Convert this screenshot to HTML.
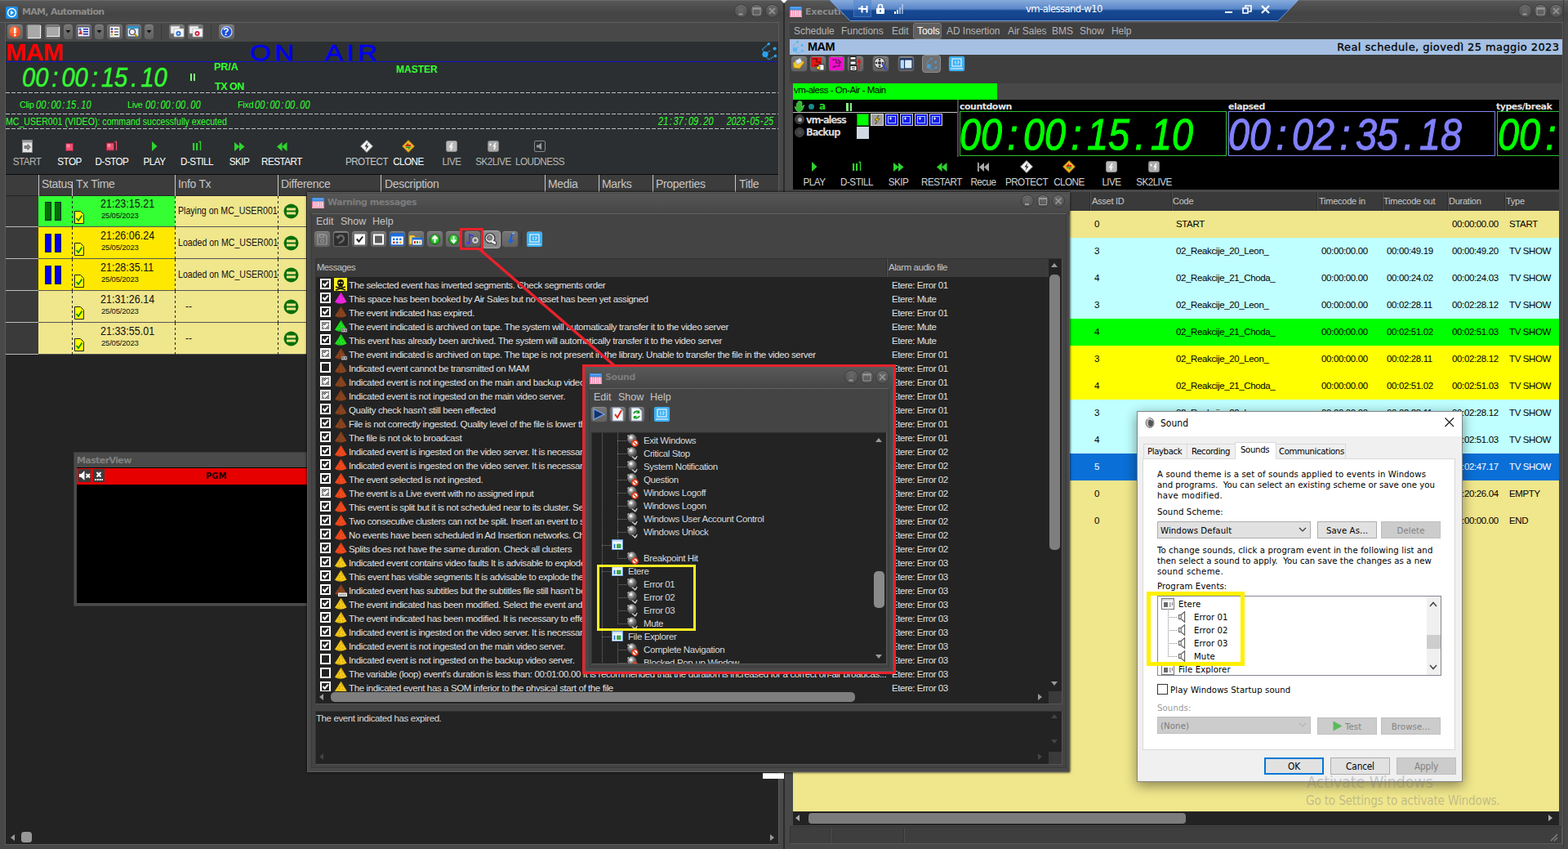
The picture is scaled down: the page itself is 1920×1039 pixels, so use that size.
<!DOCTYPE html><html><head><meta charset="utf-8"><title>MAM</title><style>
*{box-sizing:border-box;margin:0;padding:0}
html,body{width:1920px;height:1039px;overflow:hidden;background:#3e3e3e}
body{position:relative;font-family:"Liberation Sans",sans-serif;font-size:12px;color:#ddd}
div{position:absolute}
.t{white-space:nowrap;line-height:1}
svg{position:absolute;overflow:visible}
.seg{white-space:nowrap;line-height:1;font-family:"Liberation Sans",sans-serif;font-style:italic;transform-origin:0 0}
.sc{display:inline-block;position:static;width:.556em;text-align:center}
.btn{border-radius:4px;background:linear-gradient(#767676,#626262);border:1px solid #4a4a4a;box-shadow:inset 0 1px 0 #888}
.wb{border-radius:50%;background:radial-gradient(circle at 50% 35%,#6a6a6a,#4a4a4a);border:1px solid #3c3c3c;box-shadow:inset 0 1px 0 #7a7a7a}
</style></head><body><svg width="0" height="0" style="left:0;top:0"><defs><radialGradient id="spg" cx=".38" cy=".32" r=".75"><stop offset="0" stop-color="#e8e8e8"/><stop offset=".45" stop-color="#8a8a8a"/><stop offset="1" stop-color="#2a2a2a"/></radialGradient></defs></svg><div style="left:0px;top:0px;width:960px;height:1039px;background:#484848"></div><div style="left:0px;top:0px;width:960px;height:28px;background:linear-gradient(#585858,#444 60%,#484848)"></div><div style="left:0px;top:0px;width:960px;height:1px;background:#6a6a6a"></div><div style="left:959px;top:0px;width:2px;height:1039px;background:#2c2c2c"></div><div style="left:0px;top:27px;width:954px;height:1px;background:#5e5e5e"></div><div style="left:953px;top:27px;width:1px;height:1004px;background:#5a5a5a"></div><div style="left:7px;top:8px;width:15px;height:15px;background:#1e8fe8;border-radius:2px"></div><svg style="left:7px;top:8px" width="15" height="15"><circle cx="7.5" cy="7.5" r="5" fill="none" stroke="#fff" stroke-width="1.3"/><path d="M6 5L10 7.5L6 10Z" fill="#fff"/></svg><div class="t" style="left:27px;top:9px;font-weight:bold;font-size:11px;color:#8c8c8c;font-family:'DejaVu Sans',sans-serif;letter-spacing:-0.7px">MAM, Automation</div><div class="wb" style="left:899px;top:5px;width:17px;height:17px;"></div><svg style="left:899px;top:5px" width="17" height="17"><rect x="5.5" y="11.5" width="5" height="2" fill="#989898"/></svg><div class="wb" style="left:918px;top:5px;width:17px;height:17px;"></div><svg style="left:918px;top:5px" width="17" height="17"><rect x="4.0" y="5.0" width="9" height="8" fill="none" stroke="#989898" stroke-width="1"/><rect x="3.5" y="4.5" width="10" height="2" fill="#989898"/></svg><div class="wb" style="left:937px;top:5px;width:17px;height:17px;"></div><svg style="left:937px;top:5px" width="17" height="17"><path d="M5.0 5.0L12.0 12.0M12.0 5.0L5.0 12.0" stroke="#989898" stroke-width="1.6" fill="none"/></svg><div class="btn" style="left:8px;top:29px;width:21px;height:20px;"></div><div class="btn" style="left:31px;top:29px;width:21px;height:20px;"></div><div class="btn" style="left:54px;top:29px;width:21px;height:20px;"></div><div class="btn" style="left:77px;top:29px;width:13px;height:20px;"></div><div class="btn" style="left:92px;top:29px;width:21px;height:20px;"></div><div class="btn" style="left:115px;top:29px;width:13px;height:20px;"></div><div class="btn" style="left:130px;top:29px;width:21px;height:20px;"></div><div class="btn" style="left:153px;top:29px;width:21px;height:20px;"></div><div class="btn" style="left:176px;top:29px;width:13px;height:20px;"></div><div class="btn" style="left:206px;top:29px;width:21px;height:20px;"></div><div class="btn" style="left:229px;top:29px;width:21px;height:20px;"></div><div class="btn" style="left:267px;top:29px;width:21px;height:20px;"></div><div style="left:197px;top:30px;width:1px;height:18px;background:#3a3a3a"></div><div style="left:258px;top:30px;width:1px;height:18px;background:#3a3a3a"></div><svg style="left:8px;top:29px" width="21" height="20"><circle cx="10" cy="10" r="7" fill="#f4511e"/><circle cx="9" cy="8" r="5" fill="#ff8a50" opacity=".6"/><rect x="9" y="5" width="2.4" height="7" fill="#fff"/><rect x="9" y="13" width="2.4" height="2.2" fill="#fff"/></svg><div style="left:34px;top:31px;width:16px;height:16px;background:#a9a9a9;border-right:1px solid #eee;border-bottom:1px solid #eee"></div><div style="left:57px;top:33px;width:16px;height:12px;background:#a9a9a9;border-right:1px solid #eee;border-bottom:1px solid #eee"></div><svg style="left:77px;top:29px" width="13" height="20"><path d="M3.5 8L9.5 8L6.5 11.5Z" fill="#111"/></svg><svg style="left:115px;top:29px" width="13" height="20"><path d="M3.5 8L9.5 8L6.5 11.5Z" fill="#111"/></svg><svg style="left:176px;top:29px" width="13" height="20"><path d="M3.5 8L9.5 8L6.5 11.5Z" fill="#111"/></svg><svg style="left:92px;top:29px" width="21" height="20"><rect x="3" y="4" width="15" height="12" fill="#e8eef8" stroke="#446" stroke-width="1"/><rect x="10" y="6" width="6" height="1.5" fill="#22a"/><rect x="10" y="9" width="6" height="1.5" fill="#22a"/><rect x="10" y="12" width="6" height="1.5" fill="#22a"/><path d="M4 13L7 7L9 13Z" fill="#c33"/><circle cx="6" cy="7" r="1.5" fill="#36c"/></svg><svg style="left:130px;top:29px" width="21" height="20"><rect x="4" y="3" width="13" height="14" fill="#f4f4f4" stroke="#555" stroke-width="1"/><circle cx="7" cy="6.5" r="1.3" fill="#22c"/><circle cx="7" cy="10" r="1.3" fill="#c22"/><circle cx="7" cy="13.5" r="1.3" fill="#ca2"/><rect x="10" y="6" width="5" height="1" fill="#333"/><rect x="10" y="9.5" width="5" height="1" fill="#333"/><rect x="10" y="13" width="5" height="1" fill="#333"/></svg><svg style="left:153px;top:29px" width="21" height="20"><rect x="3" y="3" width="14" height="13" fill="#dde8f6" stroke="#357" stroke-width="1"/><rect x="3" y="3" width="14" height="3" fill="#39c"/><circle cx="9" cy="10" r="3.5" fill="#eef" stroke="#444" stroke-width="1.2"/><path d="M11.5 12.5L15 16" stroke="#b80" stroke-width="2"/></svg><svg style="left:206px;top:29px" width="21" height="20"><rect x="3" y="3" width="11" height="9" fill="#eee" stroke="#999" stroke-width=".6"/><rect x="7" y="6" width="12" height="10" fill="#f6f6f6" stroke="#aaa" stroke-width=".6"/><circle cx="12.5" cy="12" r="3" fill="#1e6fd0"/><circle cx="12.5" cy="12" r="1.2" fill="#fff"/></svg><svg style="left:229px;top:29px" width="21" height="20"><rect x="3" y="3" width="11" height="9" fill="#eee" stroke="#999" stroke-width=".6"/><rect x="7" y="6" width="12" height="10" fill="#f6f6f6" stroke="#aaa" stroke-width=".6"/><circle cx="12.5" cy="12" r="3" fill="#d01e3c"/><circle cx="12.5" cy="12" r="1.2" fill="#fff"/></svg><svg style="left:267px;top:29px" width="21" height="20"><circle cx="10.5" cy="10" r="6.5" fill="#1b4fd8" stroke="#cfe0ff" stroke-width="1.2"/></svg><div class="t" style="left:273px;top:33px;font-weight:bold;font-size:12px;color:#fff">?</div><div style="left:7px;top:51px;width:946px;height:162px;background:#2b2f31"></div><div class="t" style="left:7px;top:49px;font-weight:bold;font-size:30.3px;color:#ff0000;letter-spacing:-.7px">MAM</div><div class="t" style="left:306px;top:51px;font-size:27.4px;color:#0000ee;letter-spacing:3.8px;word-spacing:18px;transform:scaleX(1.2);transform-origin:0 0;-webkit-text-stroke:.7px #0000ee">ON AIR</div><div style="left:7px;top:75px;width:946px;height:1px;background:#1414d0"></div><svg style="left:931px;top:51px" width="22" height="24" viewBox="0 0 22 24"><path d="M2.5 9.5L10 2.8M2.5 9.5L5 13.5M7 18.5L10.5 22L18 17.5M8.5 13.5L12.5 10.5" stroke="#29a3f0" stroke-width="1.5" fill="none" stroke-dasharray="1.4 1.1"/><circle cx="6" cy="15.5" r="3.6" fill="#29a3f0"/><circle cx="10.3" cy="2.8" r="1.7" fill="#29a3f0"/><circle cx="17.6" cy="8.5" r="2.1" fill="#29a3f0"/><circle cx="18.4" cy="17.5" r="1.8" fill="#29a3f0"/></svg><div class="seg" style="left:27.3px;top:78.46px;font-size:40px;color:#33ff33;-webkit-text-stroke:0.6px #33ff33;transform:scale(0.7262,0.8310)">00<span class="sc">:</span>00<span class="sc">:</span>15<span class="sc">.</span>10</div><div style="left:233px;top:90px;width:2px;height:9px;background:#7dff7d"></div><div style="left:237px;top:90px;width:2px;height:9px;background:#7dff7d"></div><div class="t" style="left:262px;top:76px;font-weight:bold;font-size:12.5px;color:#33ff33">PR/A</div><div class="t" style="left:263px;top:100px;font-weight:bold;font-size:12.5px;color:#33ff33;letter-spacing:-.5px">TX ON</div><div class="t" style="left:485px;top:79px;font-weight:bold;font-size:12px;color:#33ff33">MASTER</div><div style="left:7px;top:113px;width:946px;height:1px;background:repeating-linear-gradient(90deg,#bfc2c4 0 5px,transparent 5px 7px)"></div><div style="left:7px;top:139px;width:946px;height:1px;background:repeating-linear-gradient(90deg,#bfc2c4 0 5px,transparent 5px 7px)"></div><div style="left:7px;top:157px;width:946px;height:1px;background:repeating-linear-gradient(90deg,#bfc2c4 0 5px,transparent 5px 7px)"></div><div class="t" style="left:24px;top:123px;font-size:11px;color:#33ff33;letter-spacing:-.4px">Clip</div><div class="seg" style="left:44px;top:121.18px;font-size:20px;color:#33ff33;transform:scale(0.5531,0.6983)">00<span class="sc">:</span>00<span class="sc">:</span>15<span class="sc">.</span>10</div><div class="t" style="left:156px;top:123px;font-size:11px;color:#33ff33;letter-spacing:-.4px">Live</div><div class="seg" style="left:178px;top:121.18px;font-size:20px;color:#33ff33;transform:scale(0.5531,0.6983)">00<span class="sc">:</span>00<span class="sc">:</span>00<span class="sc">.</span>00</div><div class="t" style="left:291px;top:123px;font-size:11px;color:#33ff33;letter-spacing:-.4px">Fixd</div><div class="seg" style="left:312px;top:121.18px;font-size:20px;color:#33ff33;transform:scale(0.5531,0.6983)">00<span class="sc">:</span>00<span class="sc">:</span>00<span class="sc">.</span>00</div><div class="t" style="left:7px;top:143px;font-size:12.4px;color:#33ff33;transform:scaleX(.855);transform-origin:0 0">MC_USER001 (VIDEO): command successfully executed</div><div class="seg" style="left:806px;top:141.18px;font-size:20px;color:#33ff33;transform:scale(0.5531,0.6983)">21<span class="sc">:</span>37<span class="sc">:</span>09<span class="sc">.</span>20</div><div class="seg" style="left:890px;top:141.18px;font-size:20px;color:#33ff33;transform:scale(0.5126,0.6983)">2023<span class="sc">-</span>05<span class="sc">-</span>25</div><div class="t" style="left:-7px;top:191px;width:80px;text-align:center;font-size:13px;color:#b8b8b8;letter-spacing:-.6px;transform:scaleX(.9)">START</div><div class="t" style="left:45px;top:191px;width:80px;text-align:center;font-size:13px;color:#fff;letter-spacing:-.6px;transform:scaleX(.9)">STOP</div><div class="t" style="left:97px;top:191px;width:80px;text-align:center;font-size:13px;color:#fff;letter-spacing:-.6px;transform:scaleX(.9)">D-STOP</div><div class="t" style="left:149px;top:191px;width:80px;text-align:center;font-size:13px;color:#fff;letter-spacing:-.6px;transform:scaleX(.9)">PLAY</div><div class="t" style="left:201px;top:191px;width:80px;text-align:center;font-size:13px;color:#fff;letter-spacing:-.6px;transform:scaleX(.9)">D-STILL</div><div class="t" style="left:253px;top:191px;width:80px;text-align:center;font-size:13px;color:#fff;letter-spacing:-.6px;transform:scaleX(.9)">SKIP</div><div class="t" style="left:305px;top:191px;width:80px;text-align:center;font-size:13px;color:#fff;letter-spacing:-.6px;transform:scaleX(.9)">RESTART</div><div class="t" style="left:409px;top:191px;width:80px;text-align:center;font-size:13px;color:#c8c8c8;letter-spacing:-.6px;transform:scaleX(.9)">PROTECT</div><div class="t" style="left:460px;top:191px;width:80px;text-align:center;font-size:13px;color:#fff;letter-spacing:-.6px;transform:scaleX(.9)">CLONE</div><div class="t" style="left:513px;top:191px;width:80px;text-align:center;font-size:13px;color:#b8b8b8;letter-spacing:-.6px;transform:scaleX(.9)">LIVE</div><div class="t" style="left:564px;top:191px;width:80px;text-align:center;font-size:13px;color:#b8b8b8;letter-spacing:-.6px;transform:scaleX(.9)">SK2LIVE</div><div class="t" style="left:621px;top:191px;width:80px;text-align:center;font-size:13px;color:#b8b8b8;letter-spacing:-.6px;transform:scaleX(.9)">LOUDNESS</div><svg style="left:26.5px;top:171px" width="13" height="16"><rect x=".5" y=".5" width="12" height="15" fill="#e4e4e4" stroke="#888"/><rect x="1" y="1" width="11" height="2.5" fill="#999"/><path d="M3 7.5H7V5.5L10.5 9L7 12.5V10.5H3Z" fill="#888" stroke="#444" stroke-width=".6"/></svg><svg style="left:80.0px;top:175px" width="10" height="10"><rect x=".5" y=".5" width="9" height="9" fill="#e8506e" stroke="#a02040"/><rect x="1.5" y="1.5" width="4" height="4" fill="#ff9ab0" opacity=".7"/></svg><svg style="left:130.0px;top:172px" width="14" height="13"><rect x=".5" y="3" width="9" height="9" fill="#e8506e" stroke="#a02040"/><rect x="1.5" y="4" width="4" height="4" fill="#ff9ab0" opacity=".7"/><path d="M10.5 1.5H12.5V12" stroke="#e8506e" stroke-width="1.3" fill="none"/></svg><svg style="left:185.0px;top:173px" width="8" height="12"><path d="M1 0L7.5 6L1 12Z" fill="#2fd32f"/></svg><svg style="left:235.0px;top:172px" width="12" height="13"><rect x="1" y="3" width="2.2" height="9" fill="#2fd32f"/><rect x="5" y="3" width="2.2" height="9" fill="#2fd32f"/><path d="M8.5 1.5H10.5V12" stroke="#2fd32f" stroke-width="1.3" fill="none"/></svg><svg style="left:286.5px;top:174px" width="13" height="11"><path d="M0 0L6.5 5.5L0 11Z" fill="#2fd32f"/><path d="M6 0L12.5 5.5L6 11Z" fill="#2fd32f"/></svg><svg style="left:338.5px;top:174px" width="13" height="11"><path d="M6.5 0L0 5.5L6.5 11Z" fill="#2fd32f"/><path d="M12.5 0L6 5.5L12.5 11Z" fill="#2fd32f"/></svg><svg style="left:441.0px;top:171px" width="16" height="16"><path d="M8 .5L15.5 8L8 15.5L.5 8Z" fill="#f4f4f4" stroke="#888" stroke-width=".8"/><path d="M9.5 3L5.5 8.5H8L6.5 13L10.5 7.5H8Z" fill="#222"/></svg><svg style="left:492.0px;top:171px" width="16" height="16"><path d="M8 .5L15.5 8L8 15.5L.5 8Z" fill="#f0b428" stroke="#b07800" stroke-width=".8"/><path d="M4.5 7L8 4L8 6H11V8H4.5Z" fill="#d02020"/><path d="M11.5 9L8 12V10H5V8.5H11.5Z" fill="#20a020"/></svg><svg style="left:546.0px;top:172px" width="14" height="14"><rect x=".5" y=".5" width="13" height="13" rx="2" fill="#b8b8b8" stroke="#8a8a8a"/><path d="M8 3L5 7.5H7.5L6 11.5" stroke="#f4f4f4" stroke-width="1.8" fill="none"/></svg><svg style="left:597.0px;top:172px" width="14" height="14"><rect x=".5" y=".5" width="13" height="13" rx="2" fill="#a8a8a8" stroke="#808080"/><path d="M2 5H5M3.5 3.5V6.5" stroke="#f4f4f4" stroke-width="1.2"/><path d="M10 3L7.5 7H9.5L8 11" stroke="#f4f4f4" stroke-width="1.6" fill="none"/></svg><svg style="left:654.0px;top:172px" width="14" height="14"><rect x=".5" y=".5" width="13" height="13" rx="1.5" fill="none" stroke="#8a8a8a"/><path d="M3 5.5H5.5L9 2.5V11.5L5.5 8.5H3Z" fill="#9a9a9a"/></svg><div style="left:7px;top:212.5px;width:946px;height:2px;background:#0c0c0c"></div><div style="left:7px;top:214px;width:946px;height:26px;background:#3c3c3c"></div><div style="left:7px;top:239px;width:946px;height:1px;background:#999"></div><div style="left:7px;top:239px;width:946px;height:780px;background:#232323"></div><div class="t" style="left:51px;top:217.6px;font-size:14px;color:#c4c4c4;letter-spacing:-.32px">Status</div><div class="t" style="left:93px;top:217.6px;font-size:14px;color:#c4c4c4;letter-spacing:-.32px">Tx Time</div><div class="t" style="left:218px;top:217.6px;font-size:14px;color:#c4c4c4;letter-spacing:-.32px">Info Tx</div><div class="t" style="left:344px;top:217.6px;font-size:14px;color:#c4c4c4;letter-spacing:-.32px">Difference</div><div class="t" style="left:471px;top:217.6px;font-size:14px;color:#c4c4c4;letter-spacing:-.32px">Description</div><div class="t" style="left:671px;top:217.6px;font-size:14px;color:#c4c4c4;letter-spacing:-.32px">Media</div><div class="t" style="left:737px;top:217.6px;font-size:14px;color:#c4c4c4;letter-spacing:-.32px">Marks</div><div class="t" style="left:803px;top:217.6px;font-size:14px;color:#c4c4c4;letter-spacing:-.32px">Properties</div><div class="t" style="left:905px;top:217.6px;font-size:14px;color:#c4c4c4;letter-spacing:-.32px">Title</div><div style="left:47px;top:214px;width:1px;height:26px;background:#c8c8c8"></div><div style="left:88px;top:214px;width:1px;height:26px;background:#c8c8c8"></div><div style="left:214px;top:214px;width:1px;height:26px;background:#c8c8c8"></div><div style="left:340px;top:214px;width:1px;height:26px;background:#c8c8c8"></div><div style="left:466px;top:214px;width:1px;height:26px;background:#c8c8c8"></div><div style="left:667px;top:214px;width:1px;height:26px;background:#c8c8c8"></div><div style="left:733px;top:214px;width:1px;height:26px;background:#c8c8c8"></div><div style="left:799px;top:214px;width:1px;height:26px;background:#c8c8c8"></div><div style="left:900px;top:214px;width:1px;height:26px;background:#c8c8c8"></div><div style="left:88px;top:214px;width:1px;height:8px;background:#3c3c3c"></div><div style="left:7px;top:239.6px;width:40px;height:38.8px;background:#3a3a3a;border-bottom:1px solid #bbb"></div><div style="left:47px;top:239.6px;width:328px;height:38.8px;background:#f0e68c;border-bottom:1px solid #555"></div><div style="left:47px;top:239.6px;width:167px;height:38.8px;background:#33ff33;border-bottom:1px solid #555"></div><div style="left:88px;top:239.6px;width:1px;height:38.8px;background:repeating-linear-gradient(#222 0 3px,transparent 3px 6px)"></div><div style="left:214px;top:239.6px;width:1px;height:38.8px;background:repeating-linear-gradient(#222 0 3px,transparent 3px 6px)"></div><div style="left:340px;top:239.6px;width:1px;height:38.8px;background:repeating-linear-gradient(#222 0 3px,transparent 3px 6px)"></div><div style="left:55px;top:247px;width:8px;height:23px;background:#006e00;border:1px solid #123"></div><div style="left:67px;top:247px;width:8px;height:23px;background:#006e00;border:1px solid #123"></div><svg style="left:91px;top:258px" width="12" height="16"><path d="M.5 .5H7.5L11.5 4.5V15.5H.5Z" fill="#ffff00" stroke="#222" stroke-width="1"/><path d="M2.5 9L5 12L9.5 5.5" stroke="#0a8a0a" stroke-width="1.8" fill="none"/></svg><div class="t" style="left:123px;top:242px;font-size:14.3px;color:#111;transform:scaleX(.875);transform-origin:0 0">21:23:15.21</div><div class="t" style="left:124px;top:259px;font-size:9.5px;color:#111;letter-spacing:-.2px">25/05/2023</div><div class="t" style="left:218px;top:252px;font-size:12.2px;color:#111;transform:scaleX(.868);transform-origin:0 0">Playing on MC_USER001</div><svg style="left:347px;top:249px" width="19" height="19"><circle cx="9.5" cy="9.5" r="9" fill="#0a6e0a"/><rect x="4" y="5.5" width="11" height="3" fill="#f0e68c"/><rect x="4" y="10.5" width="11" height="3" fill="#f0e68c"/></svg><div style="left:7px;top:278.4px;width:40px;height:38.8px;background:#3a3a3a;border-bottom:1px solid #bbb"></div><div style="left:47px;top:278.4px;width:328px;height:38.8px;background:#f0e68c;border-bottom:1px solid #555"></div><div style="left:47px;top:278.4px;width:167px;height:38.8px;background:#ffe800;border-bottom:1px solid #555"></div><div style="left:88px;top:278.4px;width:1px;height:38.8px;background:repeating-linear-gradient(#222 0 3px,transparent 3px 6px)"></div><div style="left:214px;top:278.4px;width:1px;height:38.8px;background:repeating-linear-gradient(#222 0 3px,transparent 3px 6px)"></div><div style="left:340px;top:278.4px;width:1px;height:38.8px;background:repeating-linear-gradient(#222 0 3px,transparent 3px 6px)"></div><div style="left:55px;top:286px;width:8px;height:23px;background:#0000ee;border:1px solid #123"></div><div style="left:67px;top:286px;width:8px;height:23px;background:#0000ee;border:1px solid #123"></div><svg style="left:91px;top:297px" width="12" height="16"><path d="M.5 .5H7.5L11.5 4.5V15.5H.5Z" fill="#ffff00" stroke="#222" stroke-width="1"/><path d="M2.5 9L5 12L9.5 5.5" stroke="#0a8a0a" stroke-width="1.8" fill="none"/></svg><div class="t" style="left:123px;top:281px;font-size:14.3px;color:#111;transform:scaleX(.875);transform-origin:0 0">21:26:06.24</div><div class="t" style="left:124px;top:298px;font-size:9.5px;color:#111;letter-spacing:-.2px">25/05/2023</div><div class="t" style="left:218px;top:291px;font-size:12.2px;color:#111;transform:scaleX(.868);transform-origin:0 0">Loaded on MC_USER001</div><svg style="left:347px;top:288px" width="19" height="19"><circle cx="9.5" cy="9.5" r="9" fill="#0a6e0a"/><rect x="4" y="5.5" width="11" height="3" fill="#f0e68c"/><rect x="4" y="10.5" width="11" height="3" fill="#f0e68c"/></svg><div style="left:7px;top:317.2px;width:40px;height:38.8px;background:#3a3a3a;border-bottom:1px solid #bbb"></div><div style="left:47px;top:317.2px;width:328px;height:38.8px;background:#f0e68c;border-bottom:1px solid #555"></div><div style="left:47px;top:317.2px;width:167px;height:38.8px;background:#ffe800;border-bottom:1px solid #555"></div><div style="left:88px;top:317.2px;width:1px;height:38.8px;background:repeating-linear-gradient(#222 0 3px,transparent 3px 6px)"></div><div style="left:214px;top:317.2px;width:1px;height:38.8px;background:repeating-linear-gradient(#222 0 3px,transparent 3px 6px)"></div><div style="left:340px;top:317.2px;width:1px;height:38.8px;background:repeating-linear-gradient(#222 0 3px,transparent 3px 6px)"></div><div style="left:55px;top:325px;width:8px;height:23px;background:#0000ee;border:1px solid #123"></div><div style="left:67px;top:325px;width:8px;height:23px;background:#0000ee;border:1px solid #123"></div><svg style="left:91px;top:336px" width="12" height="16"><path d="M.5 .5H7.5L11.5 4.5V15.5H.5Z" fill="#ffff00" stroke="#222" stroke-width="1"/><path d="M2.5 9L5 12L9.5 5.5" stroke="#0a8a0a" stroke-width="1.8" fill="none"/></svg><div class="t" style="left:123px;top:320px;font-size:14.3px;color:#111;transform:scaleX(.875);transform-origin:0 0">21:28:35.11</div><div class="t" style="left:124px;top:337px;font-size:9.5px;color:#111;letter-spacing:-.2px">25/05/2023</div><div class="t" style="left:218px;top:330px;font-size:12.2px;color:#111;transform:scaleX(.868);transform-origin:0 0">Loaded on MC_USER001</div><svg style="left:347px;top:327px" width="19" height="19"><circle cx="9.5" cy="9.5" r="9" fill="#0a6e0a"/><rect x="4" y="5.5" width="11" height="3" fill="#f0e68c"/><rect x="4" y="10.5" width="11" height="3" fill="#f0e68c"/></svg><div style="left:7px;top:356.0px;width:40px;height:38.8px;background:#3a3a3a;border-bottom:1px solid #bbb"></div><div style="left:47px;top:356.0px;width:328px;height:38.8px;background:#f0e68c;border-bottom:1px solid #555"></div><div style="left:47px;top:356.0px;width:167px;height:38.8px;background:#f0e68c;border-bottom:1px solid #555"></div><div style="left:88px;top:356.0px;width:1px;height:38.8px;background:repeating-linear-gradient(#222 0 3px,transparent 3px 6px)"></div><div style="left:214px;top:356.0px;width:1px;height:38.8px;background:repeating-linear-gradient(#222 0 3px,transparent 3px 6px)"></div><div style="left:340px;top:356.0px;width:1px;height:38.8px;background:repeating-linear-gradient(#222 0 3px,transparent 3px 6px)"></div><svg style="left:91px;top:375px" width="12" height="16"><path d="M.5 .5H7.5L11.5 4.5V15.5H.5Z" fill="#ffff00" stroke="#222" stroke-width="1"/><path d="M2.5 9L5 12L9.5 5.5" stroke="#0a8a0a" stroke-width="1.8" fill="none"/></svg><div class="t" style="left:123px;top:359px;font-size:14.3px;color:#111;transform:scaleX(.875);transform-origin:0 0">21:31:26.14</div><div class="t" style="left:124px;top:376px;font-size:9.5px;color:#111;letter-spacing:-.2px">25/05/2023</div><div class="t" style="left:227px;top:369px;font-size:12px;color:#111">--</div><svg style="left:347px;top:366px" width="19" height="19"><circle cx="9.5" cy="9.5" r="9" fill="#0a6e0a"/><rect x="4" y="5.5" width="11" height="3" fill="#f0e68c"/><rect x="4" y="10.5" width="11" height="3" fill="#f0e68c"/></svg><div style="left:7px;top:394.79999999999995px;width:40px;height:38.8px;background:#3a3a3a;border-bottom:1px solid #bbb"></div><div style="left:47px;top:394.79999999999995px;width:328px;height:38.8px;background:#f0e68c;border-bottom:1px solid #555"></div><div style="left:47px;top:394.79999999999995px;width:167px;height:38.8px;background:#f0e68c;border-bottom:1px solid #555"></div><div style="left:88px;top:394.79999999999995px;width:1px;height:38.8px;background:repeating-linear-gradient(#222 0 3px,transparent 3px 6px)"></div><div style="left:214px;top:394.79999999999995px;width:1px;height:38.8px;background:repeating-linear-gradient(#222 0 3px,transparent 3px 6px)"></div><div style="left:340px;top:394.79999999999995px;width:1px;height:38.8px;background:repeating-linear-gradient(#222 0 3px,transparent 3px 6px)"></div><svg style="left:91px;top:414px" width="12" height="16"><path d="M.5 .5H7.5L11.5 4.5V15.5H.5Z" fill="#ffff00" stroke="#222" stroke-width="1"/><path d="M2.5 9L5 12L9.5 5.5" stroke="#0a8a0a" stroke-width="1.8" fill="none"/></svg><div class="t" style="left:123px;top:398px;font-size:14.3px;color:#111;transform:scaleX(.875);transform-origin:0 0">21:33:55.01</div><div class="t" style="left:124px;top:415px;font-size:9.5px;color:#111;letter-spacing:-.2px">25/05/2023</div><div class="t" style="left:227px;top:408px;font-size:12px;color:#111">--</div><svg style="left:347px;top:405px" width="19" height="19"><circle cx="9.5" cy="9.5" r="9" fill="#0a6e0a"/><rect x="4" y="5.5" width="11" height="3" fill="#f0e68c"/><rect x="4" y="10.5" width="11" height="3" fill="#f0e68c"/></svg><div style="left:7px;top:1017px;width:946px;height:16px;background:#232323"></div><div style="left:6px;top:27px;width:1px;height:1007px;background:#5a5a5a"></div><div style="left:6px;top:1033px;width:948px;height:1px;background:#5e5e5e"></div><svg style="left:12px;top:1020px" width="8" height="10"><path d="M6 1L1 5L6 9Z" fill="#999"/></svg><svg style="left:942px;top:1020px" width="8" height="10"><path d="M1 1L6 5L1 9Z" fill="#999"/></svg><div style="left:26px;top:1018px;width:13px;height:13px;background:#989898;border-radius:3.5px"></div><div style="left:90px;top:553px;width:286px;height:189px;background:#4a4a4a;border:1px solid #3a3a3a"></div><div class="t" style="left:94px;top:558px;font-weight:bold;font-size:11px;color:#808080;font-family:'DejaVu Sans',sans-serif;letter-spacing:-.6px">MasterView</div><div style="left:94px;top:572px;width:282px;height:166px;background:#000"></div><div style="left:94px;top:573px;width:282px;height:20px;background:#e60000"></div><div class="t" style="left:252px;top:578px;font-weight:bold;font-size:10px;color:#1c0000;font-family:'DejaVu Sans',sans-serif">PGM</div><div style="left:96px;top:574px;width:15px;height:16px;background:#3c3c3c"></div><div style="left:114px;top:574px;width:14px;height:16px;background:#3c3c3c"></div><svg style="left:96px;top:575px" width="16" height="14"><path d="M1 5H3.5L7.5 1V13L3.5 9H1Z" fill="#fff"/><path d="M9.5 5L14 9.5M14 5L9.5 9.5" stroke="#fff" stroke-width="1.8"/></svg><svg style="left:114px;top:575px" width="14" height="15"><path d="M4.5 3L9.5 8.5M9.5 3L4.5 8.5" stroke="#fff" stroke-width="2"/><path d="M2 12H12" stroke="#fff" stroke-width="1.8" stroke-dasharray="2 .8"/></svg><div style="left:961px;top:0px;width:959px;height:1039px;background:#484848"></div><div style="left:961px;top:0px;width:959px;height:28px;background:linear-gradient(#585858,#444 60%,#484848)"></div><div style="left:961px;top:0px;width:959px;height:1px;background:#6a6a6a"></div><div style="left:967px;top:27px;width:946px;height:1px;background:#5e5e5e"></div><svg style="left:967px;top:8px" width="15" height="13"><rect x="0" y="0" width="15" height="4.5" rx="1" fill="#3a8ee6"/><path d="M2 1.5H13" stroke="#9cc8f4" stroke-width="1" stroke-dasharray="1 1"/><rect x="0" y="4.5" width="15" height="8.5" fill="#f48ab0"/><path d="M2.5 4.5V13M5 4.5V13M7.5 4.5V13M10 4.5V13M12.5 4.5V13" stroke="#fff" stroke-width="1"/><rect x="0" y="11.5" width="15" height="1.5" fill="#f8a8c4"/></svg><div class="t" style="left:986px;top:9px;font-weight:bold;font-size:11px;color:#8c8c8c;font-family:'DejaVu Sans',sans-serif;letter-spacing:-.3px">Executive</div><div class="wb" style="left:1859px;top:5px;width:17px;height:17px;"></div><svg style="left:1859px;top:5px" width="17" height="17"><rect x="5.5" y="11.5" width="5" height="2" fill="#989898"/></svg><div class="wb" style="left:1878px;top:5px;width:17px;height:17px;"></div><svg style="left:1878px;top:5px" width="17" height="17"><rect x="4.0" y="5.0" width="9" height="8" fill="none" stroke="#989898" stroke-width="1"/><rect x="3.5" y="4.5" width="10" height="2" fill="#989898"/></svg><div class="wb" style="left:1897px;top:5px;width:17px;height:17px;"></div><svg style="left:1897px;top:5px" width="17" height="17"><path d="M5.0 5.0L12.0 12.0M12.0 5.0L5.0 12.0" stroke="#989898" stroke-width="1.6" fill="none"/></svg><svg style="left:1005px;top:0" width="600" height="28"><defs><linearGradient id="rg" x1="0" y1="0" x2="0" y2="1"><stop offset="0" stop-color="#86abdc"/><stop offset=".42" stop-color="#5a86c8"/><stop offset=".5" stop-color="#174a94"/><stop offset="1" stop-color="#123f86"/></linearGradient></defs><path d="M11 0H585L560 26H36Z" fill="url(#rg)"/><path d="M11 0L36 25.5H560L585 0" fill="none" stroke="#7a9fd8" stroke-width="1"/></svg><div style="left:1045px;top:0px;width:22px;height:21px;background:rgba(60,120,200,.35);border:1px solid rgba(90,140,210,.5);border-top:none"></div><svg style="left:1051px;top:6px" width="13" height="11"><path d="M0 4.5H5M4.5 1V9.5M10.5 1V9.5M4.5 5H10.5" stroke="#fff" stroke-width="2" fill="none"/></svg><svg style="left:1073px;top:4px" width="11" height="14"><rect x="0" y="6" width="10" height="7" rx="1" fill="#fff"/><path d="M2.5 6V4A2.5 2.5 0 0 1 7.5 4V6" stroke="#fff" stroke-width="1.6" fill="none"/><rect x="4.3" y="8" width="1.4" height="3" fill="#1f559f"/></svg><svg style="left:1095px;top:4px" width="13" height="14"><rect x="0" y="10" width="2" height="3" fill="#fff"/><rect x="3" y="8" width="2" height="5" fill="#fff"/><rect x="6" y="5" width="2" height="8" fill="#c8d8f0" opacity=".7"/><rect x="9" y="1" width="2" height="12" fill="#c8d8f0" opacity=".6"/></svg><div class="t" style="left:1256px;top:6px;font-size:11.6px;color:#fff;font-family:'DejaVu Sans',sans-serif;letter-spacing:-.55px">vm-alessand-w10</div><div style="left:1500px;top:14px;width:9px;height:2px;background:#fff"></div><svg style="left:1521px;top:6px" width="12" height="12"><rect x="1" y="4" width="6" height="6" fill="none" stroke="#fff" stroke-width="1.6"/><path d="M4 3V1H11V8H8" fill="none" stroke="#fff" stroke-width="1.6"/></svg><svg style="left:1544px;top:6px" width="11" height="11"><path d="M1 1L10 10M10 1L1 10" stroke="#fff" stroke-width="2.2"/></svg><div style="left:967px;top:28px;width:946px;height:20px;background:#404040"></div><div style="left:1118px;top:28px;width:35px;height:20px;background:#5e5e5e;border:1px solid #777;border-radius:3px"></div><div class="t" style="left:972px;top:32px;font-size:12px;color:#b4b4b4;letter-spacing:-.05px">Schedule</div><div class="t" style="left:1030px;top:32px;font-size:12px;color:#b4b4b4;letter-spacing:-.05px">Functions</div><div class="t" style="left:1092px;top:32px;font-size:12px;color:#b4b4b4;letter-spacing:-.05px">Edit</div><div class="t" style="left:1123px;top:32px;font-size:12px;color:#fff;letter-spacing:-.05px">Tools</div><div class="t" style="left:1159px;top:32px;font-size:12px;color:#b4b4b4;letter-spacing:-.05px">AD Insertion</div><div class="t" style="left:1234px;top:32px;font-size:12px;color:#b4b4b4;letter-spacing:-.05px">Air Sales</div><div class="t" style="left:1288px;top:32px;font-size:12px;color:#b4b4b4;letter-spacing:-.05px">BMS</div><div class="t" style="left:1322px;top:32px;font-size:12px;color:#b4b4b4;letter-spacing:-.05px">Show</div><div class="t" style="left:1361px;top:32px;font-size:12px;color:#b4b4b4;letter-spacing:-.05px">Help</div><div style="left:967px;top:48px;width:946px;height:19px;background:#a5c0e3"></div><svg style="left:969px;top:49px" width="16.5" height="18.0" viewBox="0 0 22 24"><path d="M2.5 9.5L10 2.8M2.5 9.5L5 13.5M7 18.5L10.5 22L18 17.5M8.5 13.5L12.5 10.5" stroke="#58b4f4" stroke-width="1.5" fill="none" stroke-dasharray="1.4 1.1"/><circle cx="6" cy="15.5" r="3.6" fill="#58b4f4"/><circle cx="10.3" cy="2.8" r="1.7" fill="#58b4f4"/><circle cx="17.6" cy="8.5" r="2.1" fill="#58b4f4"/><circle cx="18.4" cy="17.5" r="1.8" fill="#58b4f4"/></svg><div class="t" style="left:989px;top:50px;font-weight:bold;font-size:14.5px;color:#000;letter-spacing:-.5px">MAM</div><div class="t" style="left:1500px;top:51px;width:1409.5px;text-align:right;left:500px;font-size:13px;color:#000;font-family:'DejaVu Sans',sans-serif;letter-spacing:.42px;-webkit-text-stroke:.3px #000">Real schedule, giovedì 25 maggio 2023</div><div style="left:967px;top:67px;width:946px;height:35px;background:#3e3e3e"></div><div class="btn" style="left:968px;top:68px;width:21px;height:20px;"></div><div class="btn" style="left:991px;top:68px;width:21px;height:20px;"></div><div class="btn" style="left:1014px;top:68px;width:21px;height:20px;"></div><div class="btn" style="left:1037px;top:68px;width:21px;height:20px;"></div><div class="btn" style="left:1068px;top:68px;width:21px;height:20px;"></div><div class="btn" style="left:1099px;top:68px;width:21px;height:20px;"></div><div class="btn" style="left:1161px;top:68px;width:21px;height:20px;"></div><div style="left:1129px;top:67px;width:23px;height:22px;background:#707070;border:1px solid #8e8e8e;border-radius:4px"></div><svg style="left:968px;top:68px" width="21" height="20"><path d="M3 9L10 4L17 8L11 16L4 15Z" fill="#f4c430" stroke="#a87800" stroke-width=".8"/><path d="M6 6L12 3L14 8L8 11Z" fill="#dfeaf8" stroke="#89a" stroke-width=".6"/></svg><svg style="left:991px;top:68px" width="21" height="20"><rect x="2" y="2" width="13" height="12" fill="#e01818"/><path d="M4 4H9V8H13V12H6" stroke="#600" stroke-width="1.2" fill="none"/><rect x="11" y="11" width="7" height="7" fill="#fff" stroke="#222" stroke-width=".8"/><rect x="9" y="13" width="4" height="4" fill="#ffe000" stroke="#222" stroke-width=".6"/></svg><svg style="left:1014px;top:68px" width="21" height="20"><rect x="2" y="2" width="17" height="16" fill="#ee10cc"/><path d="M5 5H10V9H14V13H7M12 5L16 9M5 14H9" stroke="#601050" stroke-width="1.2" fill="none"/></svg><svg style="left:1037px;top:68px" width="21" height="20"><rect x="4" y="1.5" width="7" height="3.5" fill="#fff" stroke="#111" stroke-width="1"/><rect x="4" y="7" width="7" height="4" fill="#fff" stroke="#111" stroke-width="1"/><rect x="4" y="12.5" width="8" height="6" fill="#fff" stroke="#111" stroke-width="1"/><path d="M6 14.5H10M6 16.5H10" stroke="#111" stroke-width=".8"/><path d="M15 17V7M13 9L15 5L17 9" stroke="#e01818" stroke-width="1.6" fill="none"/></svg><svg style="left:1068px;top:68px" width="21" height="20"><circle cx="9" cy="9" r="6.5" fill="#ddd" stroke="#222" stroke-width="1"/><circle cx="9" cy="9" r="2" fill="#333"/><circle cx="9" cy="5" r="1.3" fill="#333"/><circle cx="9" cy="13" r="1.3" fill="#333"/><circle cx="5" cy="9" r="1.3" fill="#333"/><circle cx="13" cy="9" r="1.3" fill="#333"/><path d="M12 10C16 12 13 16 18 17" stroke="#3a4ac0" stroke-width="2.2" fill="none"/></svg><svg style="left:1099px;top:68px" width="21" height="20"><rect x="3" y="4" width="15" height="12" fill="#dcecfc" stroke="#16305e" stroke-width="1.2"/><rect x="3" y="3.5" width="15" height="2" fill="#16305e"/><path d="M8.5 5V16" stroke="#16305e" stroke-width="1.2"/><rect x="4" y="6" width="4" height="9.5" fill="#b8d8f8"/></svg><svg style="left:1133px;top:70px" width="15.84" height="17.28" viewBox="0 0 22 24"><path d="M2.5 9.5L10 2.8M2.5 9.5L5 13.5M7 18.5L10.5 22L18 17.5M8.5 13.5L12.5 10.5" stroke="#4a9ad8" stroke-width="1.5" fill="none" stroke-dasharray="1.4 1.1"/><circle cx="6" cy="15.5" r="3.6" fill="#4a9ad8"/><circle cx="10.3" cy="2.8" r="1.7" fill="#4a9ad8"/><circle cx="17.6" cy="8.5" r="2.1" fill="#4a9ad8"/><circle cx="18.4" cy="17.5" r="1.8" fill="#4a9ad8"/></svg><svg style="left:1161px;top:68px" width="21" height="20"><rect x="1" y="1" width="19" height="18" rx="2" fill="#3ab0f4"/><rect x="5" y="4" width="11" height="9" fill="none" stroke="#e8f6ff" stroke-width="1.2"/><path d="M3 16H18" stroke="#e8f6ff" stroke-width="1.2"/><path d="M8 7H9V11M11 7H13V9H12V11" stroke="#e8f6ff" stroke-width=".9" fill="none"/></svg><div style="left:971px;top:102px;width:250px;height:20px;background:#00ff00"></div><div class="t" style="left:972px;top:105px;font-size:11.5px;color:#000;letter-spacing:-.5px">vm-aless - On-Air - Main</div><div style="left:971px;top:122px;width:938px;height:110px;background:#000"></div><div style="left:971px;top:137px;width:201px;height:1px;background:#c8c8c8"></div><div style="left:1172px;top:122px;width:2px;height:70px;background:#4a4a4a"></div><svg style="left:972px;top:122px" width="14" height="15"><path d="M1 8.5L3.5 9.5V4.5Q4.3 3.5 5 4.5V2.5Q5.8 1.3 6.6 2.5V1.8Q7.5 .6 8.3 1.8V2.8Q9.2 1.8 10 3V9Q11 7 12.8 6.6Q12 10 10.5 12.5Q9 14.5 6.5 14.5Q3.5 14.5 2.3 12Z" fill="#2fb82f" stroke="#8af08a" stroke-width=".5"/></svg><div style="left:990px;top:127px;width:7px;height:7px;background:#1a8a8a;border-radius:50%"></div><div class="t" style="left:1003px;top:124px;font-weight:bold;font-size:12px;color:#22dd22;font-family:'DejaVu Sans',sans-serif">a</div><div style="left:1036px;top:126px;width:2.5px;height:9.5px;background:#8af08a"></div><div style="left:1040.5px;top:126px;width:2.5px;height:9.5px;background:#8af08a"></div><div style="left:973px;top:140px;width:12px;height:12px;border-radius:50%;background:radial-gradient(#505050,#2c2c2c);border:1px solid #4a4a4a"></div><div style="left:973px;top:156px;width:12px;height:12px;border-radius:50%;background:radial-gradient(#505050,#2c2c2c);border:1px solid #4a4a4a"></div><div style="left:976.5px;top:143.5px;width:5px;height:5px;border-radius:50%;background:#aaa"></div><div class="t" style="left:987px;top:141.5px;font-weight:bold;font-size:11.5px;color:#d8d8d8;font-family:'DejaVu Sans',sans-serif;letter-spacing:-1.1px">vm-aless</div><div class="t" style="left:987px;top:157px;font-weight:bold;font-size:11.5px;color:#d8d8d8;font-family:'DejaVu Sans',sans-serif;letter-spacing:-1px">Backup</div><div style="left:1049px;top:139px;width:15px;height:15px;background:#00ff00;border:1.5px solid #0a8a0a"></div><div style="left:1049px;top:155px;width:15px;height:15px;background:#d0d8e4"></div><div style="left:1066px;top:139px;width:16px;height:15px;background:#a0a0a0;border:1px solid #ddd"></div><svg style="left:1066px;top:139px" width="16" height="15"><path d="M10 2L5 8H8L6 13L11 6.5H8Z" fill="#ffee00" stroke="#222" stroke-width=".6"/></svg><div style="left:1084px;top:139px;width:16px;height:15px;background:#1a1ae6;border:1px solid #ccc"></div><svg style="left:1084px;top:139px" width="16" height="15"><rect x="3.5" y="3.5" width="9" height="8" fill="none" stroke="#9cf" stroke-width="1"/><path d="M5 6H8M6.5 4.5V7.5" stroke="#fff" stroke-width="1"/></svg><div style="left:1102px;top:139px;width:16px;height:15px;background:#1a1ae6;border:1px solid #ccc"></div><svg style="left:1102px;top:139px" width="16" height="15"><rect x="3.5" y="3.5" width="9" height="8" fill="none" stroke="#9cf" stroke-width="1"/><path d="M5 6H8M6.5 4.5V7.5" stroke="#fff" stroke-width="1"/></svg><div style="left:1120px;top:139px;width:16px;height:15px;background:#1a1ae6;border:1px solid #ccc"></div><svg style="left:1120px;top:139px" width="16" height="15"><rect x="3.5" y="3.5" width="9" height="8" fill="none" stroke="#9cf" stroke-width="1"/><path d="M5 6H8M6.5 4.5V7.5" stroke="#fff" stroke-width="1"/></svg><div style="left:1138px;top:139px;width:16px;height:15px;background:#1a1ae6;border:1px solid #ccc"></div><svg style="left:1138px;top:139px" width="16" height="15"><rect x="3.5" y="3.5" width="9" height="8" fill="none" stroke="#9cf" stroke-width="1"/><path d="M5 6H8M6.5 4.5V7.5" stroke="#fff" stroke-width="1"/></svg><div class="t" style="left:1175px;top:125px;font-weight:bold;font-size:11px;color:#e4e4e4;font-family:'DejaVu Sans',sans-serif;letter-spacing:-.5px">countdown</div><div style="left:1175px;top:136px;width:327px;height:55px;border:1px solid #2fbf2f"></div><div class="seg" style="left:1175px;top:138.07px;font-size:40px;color:#00ff00;-webkit-text-stroke:0.8px #00ff00;transform:scale(1.1691,1.3268)">00<span class="sc">:</span>00<span class="sc">:</span>15<span class="sc">.</span>10</div><div class="t" style="left:1504px;top:125px;font-weight:bold;font-size:11px;color:#e4e4e4;font-family:'DejaVu Sans',sans-serif;letter-spacing:-.5px">elapsed</div><div style="left:1504px;top:136px;width:327px;height:55px;border:1px solid #8484f0"></div><div class="seg" style="left:1504px;top:138.07px;font-size:40px;color:#8080ff;-webkit-text-stroke:0.8px #8080ff;transform:scale(1.1691,1.3268)">00<span class="sc">:</span>02<span class="sc">:</span>35<span class="sc">.</span>18</div><div class="t" style="left:1832px;top:125px;font-weight:bold;font-size:11px;color:#e4e4e4;font-family:'DejaVu Sans',sans-serif;letter-spacing:-.5px">types/break</div><div style="left:1833px;top:136px;width:76px;height:55px;border:1px solid #2fbf2f;border-right:none"></div><div style="left:1833px;top:137px;width:76px;height:54px;overflow:hidden"><div class="seg" style="left:1px;top:1.07px;font-size:40px;color:#00ff00;-webkit-text-stroke:0.8px #00ff00;transform:scale(1.1691,1.3268)">00<span class="sc">:</span></div></div><div class="t" style="left:957px;top:216px;width:80px;text-align:center;font-size:13px;color:#d4d4d4;letter-spacing:-.6px;transform:scaleX(.9)">PLAY</div><div class="t" style="left:1009px;top:216px;width:80px;text-align:center;font-size:13px;color:#d4d4d4;letter-spacing:-.6px;transform:scaleX(.9)">D-STILL</div><div class="t" style="left:1060px;top:216px;width:80px;text-align:center;font-size:13px;color:#d4d4d4;letter-spacing:-.6px;transform:scaleX(.9)">SKIP</div><div class="t" style="left:1113px;top:216px;width:80px;text-align:center;font-size:13px;color:#d4d4d4;letter-spacing:-.6px;transform:scaleX(.9)">RESTART</div><div class="t" style="left:1164px;top:216px;width:80px;text-align:center;font-size:13px;color:#d4d4d4;letter-spacing:-.6px;transform:scaleX(.9)">Recue</div><div class="t" style="left:1217px;top:216px;width:80px;text-align:center;font-size:13px;color:#d4d4d4;letter-spacing:-.6px;transform:scaleX(.9)">PROTECT</div><div class="t" style="left:1269px;top:216px;width:80px;text-align:center;font-size:13px;color:#d4d4d4;letter-spacing:-.6px;transform:scaleX(.9)">CLONE</div><div class="t" style="left:1321px;top:216px;width:80px;text-align:center;font-size:13px;color:#d4d4d4;letter-spacing:-.6px;transform:scaleX(.9)">LIVE</div><div class="t" style="left:1373px;top:216px;width:80px;text-align:center;font-size:13px;color:#d4d4d4;letter-spacing:-.6px;transform:scaleX(.9)">SK2LIVE</div><svg style="left:993.0px;top:198px" width="8" height="12"><path d="M1 0L7.5 6L1 12Z" fill="#2fd32f"/></svg><svg style="left:1043.0px;top:197px" width="12" height="13"><rect x="1" y="3" width="2.2" height="9" fill="#2fd32f"/><rect x="5" y="3" width="2.2" height="9" fill="#2fd32f"/><path d="M8.5 1.5H10.5V12" stroke="#2fd32f" stroke-width="1.3" fill="none"/></svg><svg style="left:1093.5px;top:199px" width="13" height="11"><path d="M0 0L6.5 5.5L0 11Z" fill="#2fd32f"/><path d="M6 0L12.5 5.5L6 11Z" fill="#2fd32f"/></svg><svg style="left:1146.5px;top:199px" width="13" height="11"><path d="M6.5 0L0 5.5L6.5 11Z" fill="#2fd32f"/><path d="M12.5 0L6 5.5L12.5 11Z" fill="#2fd32f"/></svg><svg style="left:1197.0px;top:199px" width="14" height="11"><rect x="0" y="0" width="1.8" height="11" fill="#aaa"/><path d="M8 0L2 5.5L8 11Z" fill="#aaa"/><path d="M14 0L8 5.5L14 11Z" fill="#aaa"/></svg><svg style="left:1249.0px;top:196px" width="16" height="16"><path d="M8 .5L15.5 8L8 15.5L.5 8Z" fill="#f4f4f4" stroke="#888" stroke-width=".8"/><path d="M9.5 3L5.5 8.5H8L6.5 13L10.5 7.5H8Z" fill="#222"/></svg><svg style="left:1301.0px;top:196px" width="16" height="16"><path d="M8 .5L15.5 8L8 15.5L.5 8Z" fill="#f0b428" stroke="#b07800" stroke-width=".8"/><path d="M4.5 7L8 4L8 6H11V8H4.5Z" fill="#d02020"/><path d="M11.5 9L8 12V10H5V8.5H11.5Z" fill="#20a020"/></svg><svg style="left:1354.0px;top:197px" width="14" height="14"><rect x=".5" y=".5" width="13" height="13" rx="2" fill="#b8b8b8" stroke="#8a8a8a"/><path d="M8 3L5 7.5H7.5L6 11.5" stroke="#f4f4f4" stroke-width="1.8" fill="none"/></svg><svg style="left:1406.0px;top:197px" width="14" height="14"><rect x=".5" y=".5" width="13" height="13" rx="2" fill="#a8a8a8" stroke="#808080"/><path d="M2 5H5M3.5 3.5V6.5" stroke="#f4f4f4" stroke-width="1.2"/><path d="M10 3L7.5 7H9.5L8 11" stroke="#f4f4f4" stroke-width="1.6" fill="none"/></svg><div style="left:967px;top:232px;width:946px;height:2px;background:#484848"></div><div style="left:1311px;top:234px;width:598px;height:24px;background:#3a3a3a;border-top:1px solid #4c4c4c"></div><div class="t" style="left:1337px;top:241px;font-size:11px;color:#c8c8c8;letter-spacing:-.25px">Asset ID</div><div class="t" style="left:1436px;top:241px;font-size:11px;color:#c8c8c8;letter-spacing:-.25px">Code</div><div class="t" style="left:1615px;top:241px;font-size:11px;color:#c8c8c8;letter-spacing:-.25px">Timecode in</div><div class="t" style="left:1694px;top:241px;font-size:11px;color:#c8c8c8;letter-spacing:-.25px">Timecode out</div><div class="t" style="left:1774px;top:241px;font-size:11px;color:#c8c8c8;letter-spacing:-.25px">Duration</div><div class="t" style="left:1844px;top:241px;font-size:11px;color:#c8c8c8;letter-spacing:-.25px">Type</div><div style="left:1334px;top:235px;width:1px;height:23px;background:#2c2c2c"></div><div style="left:1335px;top:235px;width:1px;height:23px;background:#505050"></div><div style="left:1434px;top:235px;width:1px;height:23px;background:#2c2c2c"></div><div style="left:1435px;top:235px;width:1px;height:23px;background:#505050"></div><div style="left:1612px;top:235px;width:1px;height:23px;background:#2c2c2c"></div><div style="left:1613px;top:235px;width:1px;height:23px;background:#505050"></div><div style="left:1692px;top:235px;width:1px;height:23px;background:#2c2c2c"></div><div style="left:1693px;top:235px;width:1px;height:23px;background:#505050"></div><div style="left:1772px;top:235px;width:1px;height:23px;background:#2c2c2c"></div><div style="left:1773px;top:235px;width:1px;height:23px;background:#505050"></div><div style="left:1842px;top:235px;width:1px;height:23px;background:#2c2c2c"></div><div style="left:1843px;top:235px;width:1px;height:23px;background:#505050"></div><div style="left:971px;top:258px;width:938px;height:735px;background:#f0e68c"></div><div style="left:971px;top:258px;width:938px;height:33px;background:#f0e68c"></div><div class="t" style="left:1340px;top:269px;font-size:11.5px;color:#000;letter-spacing:-.37px">0</div><div class="t" style="left:1440px;top:269px;font-size:11.5px;color:#000;letter-spacing:-.37px">START</div><div class="t" style="left:1778px;top:269px;font-size:11.5px;color:#000;letter-spacing:-.37px">00:00:00.00</div><div class="t" style="left:1848px;top:269px;font-size:11.5px;color:#000;letter-spacing:-.37px">START</div><div style="left:971px;top:291px;width:938px;height:33px;background:#bfffff"></div><div class="t" style="left:1340px;top:302px;font-size:11.5px;color:#000;letter-spacing:-.37px">3</div><div class="t" style="left:1440px;top:302px;font-size:11.5px;color:#000;letter-spacing:-.37px">02_Reakcije_20_Leon_</div><div class="t" style="left:1618px;top:302px;font-size:11.5px;color:#000;letter-spacing:-.37px">00:00:00.00</div><div class="t" style="left:1698px;top:302px;font-size:11.5px;color:#000;letter-spacing:-.37px">00:00:49.19</div><div class="t" style="left:1778px;top:302px;font-size:11.5px;color:#000;letter-spacing:-.37px">00:00:49.20</div><div class="t" style="left:1848px;top:302px;font-size:11.5px;color:#000;letter-spacing:-.37px">TV SHOW</div><div style="left:971px;top:324px;width:938px;height:33px;background:#bfffff"></div><div class="t" style="left:1340px;top:335px;font-size:11.5px;color:#000;letter-spacing:-.37px">4</div><div class="t" style="left:1440px;top:335px;font-size:11.5px;color:#000;letter-spacing:-.37px">02_Reakcije_21_Choda_</div><div class="t" style="left:1618px;top:335px;font-size:11.5px;color:#000;letter-spacing:-.37px">00:00:00.00</div><div class="t" style="left:1698px;top:335px;font-size:11.5px;color:#000;letter-spacing:-.37px">00:00:24.02</div><div class="t" style="left:1778px;top:335px;font-size:11.5px;color:#000;letter-spacing:-.37px">00:00:24.03</div><div class="t" style="left:1848px;top:335px;font-size:11.5px;color:#000;letter-spacing:-.37px">TV SHOW</div><div style="left:971px;top:357px;width:938px;height:33px;background:#bfffff"></div><div class="t" style="left:1340px;top:368px;font-size:11.5px;color:#000;letter-spacing:-.37px">3</div><div class="t" style="left:1440px;top:368px;font-size:11.5px;color:#000;letter-spacing:-.37px">02_Reakcije_20_Leon_</div><div class="t" style="left:1618px;top:368px;font-size:11.5px;color:#000;letter-spacing:-.37px">00:00:00.00</div><div class="t" style="left:1698px;top:368px;font-size:11.5px;color:#000;letter-spacing:-.37px">00:02:28.11</div><div class="t" style="left:1778px;top:368px;font-size:11.5px;color:#000;letter-spacing:-.37px">00:02:28.12</div><div class="t" style="left:1848px;top:368px;font-size:11.5px;color:#000;letter-spacing:-.37px">TV SHOW</div><div style="left:971px;top:390px;width:938px;height:33px;background:#00ff00"></div><div class="t" style="left:1340px;top:401px;font-size:11.5px;color:#000;letter-spacing:-.37px">4</div><div class="t" style="left:1440px;top:401px;font-size:11.5px;color:#000;letter-spacing:-.37px">02_Reakcije_21_Choda_</div><div class="t" style="left:1618px;top:401px;font-size:11.5px;color:#000;letter-spacing:-.37px">00:00:00.00</div><div class="t" style="left:1698px;top:401px;font-size:11.5px;color:#000;letter-spacing:-.37px">00:02:51.02</div><div class="t" style="left:1778px;top:401px;font-size:11.5px;color:#000;letter-spacing:-.37px">00:02:51.03</div><div class="t" style="left:1848px;top:401px;font-size:11.5px;color:#000;letter-spacing:-.37px">TV SHOW</div><div style="left:971px;top:423px;width:938px;height:33px;background:#ffff00"></div><div class="t" style="left:1340px;top:434px;font-size:11.5px;color:#000;letter-spacing:-.37px">3</div><div class="t" style="left:1440px;top:434px;font-size:11.5px;color:#000;letter-spacing:-.37px">02_Reakcije_20_Leon_</div><div class="t" style="left:1618px;top:434px;font-size:11.5px;color:#000;letter-spacing:-.37px">00:00:00.00</div><div class="t" style="left:1698px;top:434px;font-size:11.5px;color:#000;letter-spacing:-.37px">00:02:28.11</div><div class="t" style="left:1778px;top:434px;font-size:11.5px;color:#000;letter-spacing:-.37px">00:02:28.12</div><div class="t" style="left:1848px;top:434px;font-size:11.5px;color:#000;letter-spacing:-.37px">TV SHOW</div><div style="left:971px;top:456px;width:938px;height:33px;background:#ffff00"></div><div class="t" style="left:1340px;top:467px;font-size:11.5px;color:#000;letter-spacing:-.37px">4</div><div class="t" style="left:1440px;top:467px;font-size:11.5px;color:#000;letter-spacing:-.37px">02_Reakcije_21_Choda_</div><div class="t" style="left:1618px;top:467px;font-size:11.5px;color:#000;letter-spacing:-.37px">00:00:00.00</div><div class="t" style="left:1698px;top:467px;font-size:11.5px;color:#000;letter-spacing:-.37px">00:02:51.02</div><div class="t" style="left:1778px;top:467px;font-size:11.5px;color:#000;letter-spacing:-.37px">00:02:51.03</div><div class="t" style="left:1848px;top:467px;font-size:11.5px;color:#000;letter-spacing:-.37px">TV SHOW</div><div style="left:971px;top:489px;width:938px;height:33px;background:#bfffff"></div><div class="t" style="left:1340px;top:500px;font-size:11.5px;color:#000;letter-spacing:-.37px">3</div><div class="t" style="left:1440px;top:500px;font-size:11.5px;color:#000;letter-spacing:-.37px">02_Reakcije_20_Leon_</div><div class="t" style="left:1618px;top:500px;font-size:11.5px;color:#000;letter-spacing:-.37px">00:00:00.00</div><div class="t" style="left:1698px;top:500px;font-size:11.5px;color:#000;letter-spacing:-.37px">00:02:28.11</div><div class="t" style="left:1778px;top:500px;font-size:11.5px;color:#000;letter-spacing:-.37px">00:02:28.12</div><div class="t" style="left:1848px;top:500px;font-size:11.5px;color:#000;letter-spacing:-.37px">TV SHOW</div><div style="left:971px;top:522px;width:938px;height:33px;background:#bfffff"></div><div class="t" style="left:1340px;top:533px;font-size:11.5px;color:#000;letter-spacing:-.37px">4</div><div class="t" style="left:1440px;top:533px;font-size:11.5px;color:#000;letter-spacing:-.37px">02_Reakcije_21_Choda_</div><div class="t" style="left:1618px;top:533px;font-size:11.5px;color:#000;letter-spacing:-.37px">00:00:00.00</div><div class="t" style="left:1698px;top:533px;font-size:11.5px;color:#000;letter-spacing:-.37px">00:02:51.02</div><div class="t" style="left:1778px;top:533px;font-size:11.5px;color:#000;letter-spacing:-.37px">00:02:51.03</div><div class="t" style="left:1848px;top:533px;font-size:11.5px;color:#000;letter-spacing:-.37px">TV SHOW</div><div style="left:971px;top:555px;width:938px;height:33px;background:#0a6fd6"></div><div class="t" style="left:1340px;top:566px;font-size:11.5px;color:#fff;letter-spacing:-.37px">5</div><div class="t" style="left:1440px;top:566px;font-size:11.5px;color:#fff;letter-spacing:-.37px">03_Reakcije_22_</div><div class="t" style="left:1618px;top:566px;font-size:11.5px;color:#fff;letter-spacing:-.37px">00:00:00.00</div><div class="t" style="left:1698px;top:566px;font-size:11.5px;color:#fff;letter-spacing:-.37px">00:02:47.16</div><div class="t" style="left:1778px;top:566px;font-size:11.5px;color:#fff;letter-spacing:-.37px">00:02:47.17</div><div class="t" style="left:1848px;top:566px;font-size:11.5px;color:#fff;letter-spacing:-.37px">TV SHOW</div><div style="left:971px;top:588px;width:938px;height:33px;background:#f0e68c"></div><div class="t" style="left:1340px;top:599px;font-size:11.5px;color:#000;letter-spacing:-.37px">0</div><div class="t" style="left:1778px;top:599px;font-size:11.5px;color:#000;letter-spacing:-.37px">00:20:26.04</div><div class="t" style="left:1848px;top:599px;font-size:11.5px;color:#000;letter-spacing:-.37px">EMPTY</div><div style="left:971px;top:621px;width:938px;height:33px;background:#f0e68c"></div><div class="t" style="left:1340px;top:632px;font-size:11.5px;color:#000;letter-spacing:-.37px">0</div><div class="t" style="left:1778px;top:632px;font-size:11.5px;color:#000;letter-spacing:-.37px">00:00:00.00</div><div class="t" style="left:1848px;top:632px;font-size:11.5px;color:#000;letter-spacing:-.37px">END</div><div style="left:971px;top:993px;width:938px;height:17px;background:#232323"></div><div style="left:990px;top:995px;width:462px;height:12.5px;background:#7c7c7c;border-radius:4px"></div><svg style="left:973px;top:996px" width="8" height="10"><path d="M6 1L1 5L6 9Z" fill="#aaa"/></svg><svg style="left:1895px;top:996px" width="8" height="10"><path d="M1 1L6 5L1 9Z" fill="#aaa"/></svg><div style="left:967px;top:1011px;width:946px;height:22px;background:#3e3e3e;border:1px solid #333;border-bottom-color:#5a5a5a;border-right-color:#5a5a5a"></div><div style="left:1016px;top:1014px;width:1px;height:17px;background:#333"></div><div style="left:1017px;top:1014px;width:1px;height:17px;background:#505050"></div><div style="left:1106px;top:1014px;width:1px;height:17px;background:#333"></div><div style="left:1107px;top:1014px;width:1px;height:17px;background:#505050"></div><svg style="left:1896px;top:1018px" width="12" height="12"><path d="M11 3L3 11M11 7L7 11" stroke="#888" stroke-width="1.2"/></svg><div style="left:1913px;top:27px;width:1px;height:1006px;background:#5a5a5a"></div><div style="left:1914px;top:0px;width:1px;height:1039px;background:#3a3a3a"></div><svg style="left:955px;top:0" width="10" height="5"><path d="M1 0H9L5 4Z" fill="#fff"/></svg><div style="left:934px;top:946px;width:26px;height:7px;background:#fff"></div><div style="left:376px;top:235px;width:934px;height:710px;background:#484848;border:1px solid #5c5c5c;box-shadow:0 0 3px #000"></div><div style="left:377px;top:237px;width:933px;height:26px;background:linear-gradient(#565656,#454545)"></div><svg style="left:382px;top:242px" width="15" height="13"><rect x="0" y="0" width="15" height="4.5" rx="1" fill="#3a8ee6"/><path d="M2 1.5H13" stroke="#9cc8f4" stroke-width="1" stroke-dasharray="1 1"/><rect x="0" y="4.5" width="15" height="8.5" fill="#f48ab0"/><path d="M2.5 4.5V13M5 4.5V13M7.5 4.5V13M10 4.5V13M12.5 4.5V13" stroke="#fff" stroke-width="1"/><rect x="0" y="11.5" width="15" height="1.5" fill="#f8a8c4"/></svg><div class="t" style="left:401px;top:242px;font-weight:bold;font-size:11px;color:#7c7c7c;font-family:'DejaVu Sans',sans-serif;letter-spacing:-.5px">Warning messages</div><div class="wb" style="left:1250px;top:238px;width:16px;height:16px;"></div><svg style="left:1250px;top:238px" width="16" height="16"><rect x="5.0" y="11.0" width="5" height="2" fill="#989898"/></svg><div class="wb" style="left:1269px;top:238px;width:16px;height:16px;"></div><svg style="left:1269px;top:238px" width="16" height="16"><rect x="3.5" y="4.5" width="9" height="8" fill="none" stroke="#989898" stroke-width="1"/><rect x="3.0" y="4.0" width="10" height="2" fill="#989898"/></svg><div class="wb" style="left:1288px;top:238px;width:16px;height:16px;"></div><svg style="left:1288px;top:238px" width="16" height="16"><path d="M4.5 4.5L11.5 11.5M11.5 4.5L4.5 11.5" stroke="#989898" stroke-width="1.6" fill="none"/></svg><div style="left:381px;top:261px;width:925px;height:679px;border:1px solid #3a3a3a;border-top-color:#626262;background:#444"></div><div class="t" style="left:387px;top:265px;font-size:12.5px;color:#c4c4c4">Edit</div><div class="t" style="left:417px;top:265px;font-size:12.5px;color:#c4c4c4">Show</div><div class="t" style="left:456px;top:265px;font-size:12.5px;color:#c4c4c4">Help</div><div class="btn" style="left:384px;top:282px;width:21px;height:21px;"></div><div class="btn" style="left:407px;top:282px;width:21px;height:21px;"></div><div class="btn" style="left:430px;top:282px;width:21px;height:21px;"></div><div class="btn" style="left:453px;top:282px;width:21px;height:21px;"></div><div class="btn" style="left:476px;top:282px;width:21px;height:21px;"></div><div class="btn" style="left:499px;top:282px;width:21px;height:21px;"></div><div class="btn" style="left:522px;top:282px;width:21px;height:21px;"></div><div class="btn" style="left:545px;top:282px;width:21px;height:21px;"></div><div class="btn" style="left:568px;top:282px;width:21px;height:21px;"></div><div style="left:590px;top:282px;width:23px;height:22px;background:#8a8a8a;border:1px solid #aaa;border-radius:4px"></div><div class="btn" style="left:614px;top:282px;width:21px;height:21px;"></div><div class="btn" style="left:644px;top:282px;width:21px;height:21px;"></div><div style="left:638px;top:285px;width:1px;height:16px;background:#333"></div><svg style="left:384px;top:282.5px" width="21" height="20"><path d="M5 4H14L16 6V16H5Z" fill="none" stroke="#9a9a9a" stroke-width="1.2"/><rect x="7.5" y="4" width="5" height="3.5" fill="none" stroke="#9a9a9a" stroke-width="1"/><circle cx="10.5" cy="12" r="2" fill="none" stroke="#9a9a9a" stroke-width="1"/></svg><svg style="left:407px;top:282.5px" width="21" height="20"><rect x="2" y="2" width="17" height="16" rx="2" fill="#2e2e2e"/><path d="M6 8C8 4 14 4 14 9C14 13 9 13 8 15" stroke="#6a6a6a" stroke-width="2.2" fill="none"/><path d="M4 6L7 10L10 6Z" fill="#6a6a6a"/></svg><svg style="left:430px;top:282.5px" width="21" height="20"><rect x="4" y="3.5" width="13" height="13" fill="#fff"/><path d="M6.8 9.5L9.5 12.6L14.2 6.5" stroke="#222" stroke-width="2" fill="none"/></svg><svg style="left:453px;top:282.5px" width="21" height="20"><rect x="5" y="4.5" width="11" height="11" fill="#5c5c5c" stroke="#fff" stroke-width="2"/></svg><svg style="left:476px;top:282.5px" width="21" height="20"><rect x="2.5" y="3" width="16" height="14" fill="#fff" stroke="#1a5fc8" stroke-width="1.4"/><rect x="2.5" y="3" width="16" height="3.5" fill="#1a6fe0"/><rect x="5" y="8.5" width="2.5" height="2.5" fill="#1a6fe0"/><rect x="9" y="8.5" width="2.5" height="2.5" fill="#1a6fe0"/><rect x="13" y="8.5" width="2.5" height="2.5" fill="#1a6fe0"/><rect x="5" y="12.5" width="2.5" height="2.5" fill="#e02020"/><rect x="9" y="12.5" width="2.5" height="2.5" fill="#1a6fe0"/><rect x="13" y="12.5" width="2.5" height="2.5" fill="#e0a020"/></svg><svg style="left:499px;top:282.5px" width="21" height="20"><path d="M2 5H8L10 7H16V16H2Z" fill="#f4d048" stroke="#a88000" stroke-width=".8"/><rect x="6" y="8" width="12" height="9" fill="#fff" stroke="#1a5fc8" stroke-width="1"/><rect x="6" y="8" width="12" height="2.5" fill="#1a6fe0"/><rect x="8" y="12" width="2" height="3" fill="#e02020"/><rect x="11" y="12" width="2" height="3" fill="#20a020"/><rect x="14" y="12" width="2" height="3" fill="#e0a020"/></svg><svg style="left:522px;top:282.5px" width="21" height="20"><circle cx="10.5" cy="10" r="6" fill="#28b428" stroke="#0a6a0a" stroke-width="1"/><circle cx="10.5" cy="8.5" r="4" fill="#7ae87a" opacity=".5"/><path d="M10.5 14V7M7.5 9.5L10.5 6L13.5 9.5" stroke="#fff" stroke-width="1.8" fill="none"/></svg><svg style="left:545px;top:282.5px" width="21" height="20"><circle cx="10.5" cy="10" r="6" fill="#28b428" stroke="#0a6a0a" stroke-width="1"/><circle cx="10.5" cy="8.5" r="4" fill="#7ae87a" opacity=".5"/><path d="M10.5 6V13M7.5 10.5L10.5 14L13.5 10.5" stroke="#fff" stroke-width="1.8" fill="none"/></svg><svg style="left:568px;top:282.5px" width="21" height="20"><path d="M7 14V4L12 6" stroke="#3a3ad8" stroke-width="1.6" fill="none"/><ellipse cx="5.5" cy="14.5" rx="2.5" ry="2" fill="#5a3ad8"/><circle cx="14" cy="11" r="4.5" fill="#c8c8c8" stroke="#555" stroke-width="1"/><circle cx="14" cy="11" r="1.8" fill="#666"/></svg><svg style="left:591px;top:282.5px" width="21" height="20"><circle cx="9" cy="8.5" r="6" fill="#d8d8d8" stroke="#333" stroke-width="1.2"/><circle cx="8.5" cy="8" r="3" fill="#888" stroke="#444" stroke-width=".8"/><path d="M10 14L16 17L17 13L13 11" fill="#eee" stroke="#333" stroke-width="1"/></svg><svg style="left:614px;top:282.5px" width="21" height="20"><path d="M13 3L11 11" stroke="#1a5fe0" stroke-width="2.2"/><path d="M8 12L11 15L15 11L12 10Z" fill="#1a5fe0"/><path d="M13 3L16 2" stroke="#9cf" stroke-width="1.2"/></svg><svg style="left:644px;top:282.5px" width="21" height="20"><rect x="1" y="1" width="19" height="18" rx="2" fill="#3ab0f4"/><rect x="5" y="4" width="11" height="9" fill="none" stroke="#e8f6ff" stroke-width="1.2"/><path d="M3 16H18" stroke="#e8f6ff" stroke-width="1.2"/><path d="M8 7H9V11M11 7H13V9H12V11" stroke="#e8f6ff" stroke-width=".9" fill="none"/></svg><div style="left:563px;top:279px;width:29px;height:27px;border:3px solid #e8222c"></div><div style="left:386px;top:316px;width:915px;height:546px;background:#232323;border:1px solid #555;border-top-color:#333;border-left-color:#333"></div><div style="left:387px;top:317px;width:897px;height:22px;background:#3b3b3b"></div><div style="left:1085px;top:317px;width:1px;height:22px;background:#2a2a2a"></div><div style="left:1086px;top:317px;width:1px;height:22px;background:#555"></div><div class="t" style="left:388px;top:322px;font-size:11.2px;color:#c4c4c4;letter-spacing:-.5px">Messages</div><div class="t" style="left:1088px;top:322px;font-size:11.5px;color:#c4c4c4;letter-spacing:-.45px">Alarm audio file</div><div style="left:387px;top:339px;width:897px;height:507px;overflow:hidden"><div style="left:5px;top:2px;width:13px;height:13px;background:#232323;border:2.2px solid #fff"></div><svg style="left:5px;top:2px" width="13" height="13"><path d="M3.4 6L5.7 8.6L9.8 3.6" stroke="#fff" stroke-width="2.1" fill="none"/></svg><svg style="left:22px;top:1px" width="16" height="16"><rect x="0" y="0" width="16" height="16" fill="#ffee22"/><circle cx="8" cy="6" r="4" fill="#111"/><rect x="5.5" y="8" width="5" height="3.5" fill="#111"/><circle cx="6.4" cy="6" r="1.1" fill="#ffee22"/><circle cx="9.6" cy="6" r="1.1" fill="#ffee22"/><path d="M2 11L14 15M14 11L2 15" stroke="#111" stroke-width="1.5"/></svg><div class="t" style="left:40px;top:5px;width:655px;overflow:hidden;font-size:11.5px;color:#e0e0e0;letter-spacing:-.385px">The selected event has inverted segments. Check segments order</div><div class="t" style="left:705px;top:5px;font-size:11.5px;color:#e0e0e0;letter-spacing:-.45px">Etere: Error 01</div><div style="left:5px;top:19px;width:13px;height:13px;background:#232323;border:2.2px solid #fff"></div><svg style="left:5px;top:19px" width="13" height="13"><path d="M3.4 6L5.7 8.6L9.8 3.6" stroke="#fff" stroke-width="2.1" fill="none"/></svg><svg style="left:22px;top:18px" width="16" height="16"><path d="M8.6 .8L15.6 12.6Q8.5 16.8 .9 12.8Z" fill="#f028e0" opacity="1"/><path d="M8.6 .8L15.6 12.6Q8.5 16.8 .9 12.8Z" fill="none" stroke="#7a0a72" stroke-width="1" stroke-dasharray="1 1.2" opacity=".8"/><path d="M9 3.5L10.5 8M7 7L6 11.5M10.5 10.5L11.5 12.5M4.5 12.5L9 13.5" stroke="#7a0a72" stroke-width="1" fill="none" stroke-dasharray="1 1.3" opacity=".75"/></svg><div class="t" style="left:40px;top:22px;width:655px;overflow:hidden;font-size:11.5px;color:#e0e0e0;letter-spacing:-.385px">This space has been booked by Air Sales but no asset has been yet assigned</div><div class="t" style="left:705px;top:22px;font-size:11.5px;color:#e0e0e0;letter-spacing:-.45px">Etere: Mute</div><div style="left:5px;top:36px;width:13px;height:13px;background:#232323;border:2.2px solid #fff"></div><svg style="left:5px;top:36px" width="13" height="13"><path d="M3.4 6L5.7 8.6L9.8 3.6" stroke="#fff" stroke-width="2.1" fill="none"/></svg><svg style="left:22px;top:35px" width="16" height="16"><path d="M8.6 .8L15.6 12.6Q8.5 16.8 .9 12.8Z" fill="#c85a1e" opacity=".62"/><path d="M8.6 .8L15.6 12.6Q8.5 16.8 .9 12.8Z" fill="none" stroke="#3a1a08" stroke-width="1" stroke-dasharray="1 1.2" opacity=".8"/><path d="M9 3.5L10.5 8M7 7L6 11.5M10.5 10.5L11.5 12.5M4.5 12.5L9 13.5" stroke="#3a1a08" stroke-width="1" fill="none" stroke-dasharray="1 1.3" opacity=".75"/></svg><div class="t" style="left:40px;top:39px;width:655px;overflow:hidden;font-size:11.5px;color:#e0e0e0;letter-spacing:-.385px">The event indicated has expired.</div><div class="t" style="left:705px;top:39px;font-size:11.5px;color:#e0e0e0;letter-spacing:-.45px">Etere: Error 01</div><div style="left:5px;top:53px;width:13px;height:13px;background:#fff"></div><svg style="left:5px;top:53px" width="13" height="13"><defs><pattern id="p5_53" width="2" height="2" patternUnits="userSpaceOnUse"><rect width="1" height="1" fill="#111"/><rect x="1" y="1" width="1" height="1" fill="#111"/></pattern></defs><rect x="2" y="2" width="9" height="9" fill="url(#p5_53)"/><path d="M3.6 6L5.8 8.4L9.6 4" stroke="#fff" stroke-width="2.2" fill="none"/></svg><svg style="left:22px;top:52px" width="16" height="16"><path d="M8.6 .8L15.6 12.6Q8.5 16.8 .9 12.8Z" fill="#22e022" opacity="1"/><path d="M8.6 .8L15.6 12.6Q8.5 16.8 .9 12.8Z" fill="none" stroke="#0a6a0a" stroke-width="1" stroke-dasharray="1 1.2" opacity=".8"/><path d="M9 3.5L10.5 8M7 7L6 11.5M10.5 10.5L11.5 12.5M4.5 12.5L9 13.5" stroke="#0a6a0a" stroke-width="1" fill="none" stroke-dasharray="1 1.3" opacity=".75"/><rect x="9" y="11" width="7" height="4.5" fill="#bbb" stroke="#555" stroke-width=".6"/><circle cx="11" cy="13.2" r=".9" fill="#444"/><circle cx="14" cy="13.2" r=".9" fill="#444"/></svg><div class="t" style="left:40px;top:56px;width:655px;overflow:hidden;font-size:11.5px;color:#e0e0e0;letter-spacing:-.385px">The event indicated is archived on tape. The system will automatically transfer it to the video server</div><div class="t" style="left:705px;top:56px;font-size:11.5px;color:#e0e0e0;letter-spacing:-.45px">Etere: Mute</div><div style="left:5px;top:70px;width:13px;height:13px;background:#232323;border:2.2px solid #fff"></div><svg style="left:5px;top:70px" width="13" height="13"><path d="M3.4 6L5.7 8.6L9.8 3.6" stroke="#fff" stroke-width="2.1" fill="none"/></svg><svg style="left:22px;top:69px" width="16" height="16"><path d="M8.6 .8L15.6 12.6Q8.5 16.8 .9 12.8Z" fill="#22e022" opacity="1"/><path d="M8.6 .8L15.6 12.6Q8.5 16.8 .9 12.8Z" fill="none" stroke="#0a6a0a" stroke-width="1" stroke-dasharray="1 1.2" opacity=".8"/><path d="M9 3.5L10.5 8M7 7L6 11.5M10.5 10.5L11.5 12.5M4.5 12.5L9 13.5" stroke="#0a6a0a" stroke-width="1" fill="none" stroke-dasharray="1 1.3" opacity=".75"/></svg><div class="t" style="left:40px;top:73px;width:655px;overflow:hidden;font-size:11.5px;color:#e0e0e0;letter-spacing:-.385px">This event has already been archived. The system will automatically transfer it to the video server</div><div class="t" style="left:705px;top:73px;font-size:11.5px;color:#e0e0e0;letter-spacing:-.45px">Etere: Mute</div><div style="left:5px;top:87px;width:13px;height:13px;background:#fff"></div><svg style="left:5px;top:87px" width="13" height="13"><defs><pattern id="p5_87" width="2" height="2" patternUnits="userSpaceOnUse"><rect width="1" height="1" fill="#111"/><rect x="1" y="1" width="1" height="1" fill="#111"/></pattern></defs><rect x="2" y="2" width="9" height="9" fill="url(#p5_87)"/><path d="M3.6 6L5.8 8.4L9.6 4" stroke="#fff" stroke-width="2.2" fill="none"/></svg><svg style="left:22px;top:86px" width="16" height="16"><path d="M8.6 .8L15.6 12.6Q8.5 16.8 .9 12.8Z" fill="#c85a1e" opacity=".62"/><path d="M8.6 .8L15.6 12.6Q8.5 16.8 .9 12.8Z" fill="none" stroke="#3a1a08" stroke-width="1" stroke-dasharray="1 1.2" opacity=".8"/><path d="M9 3.5L10.5 8M7 7L6 11.5M10.5 10.5L11.5 12.5M4.5 12.5L9 13.5" stroke="#3a1a08" stroke-width="1" fill="none" stroke-dasharray="1 1.3" opacity=".75"/><rect x="9" y="11" width="7" height="4.5" fill="#bbb" stroke="#555" stroke-width=".6"/><circle cx="11" cy="13.2" r=".9" fill="#444"/><circle cx="14" cy="13.2" r=".9" fill="#444"/></svg><div class="t" style="left:40px;top:90px;width:655px;overflow:hidden;font-size:11.5px;color:#e0e0e0;letter-spacing:-.385px">The event indicated is archived on tape. The tape is not present in the library. Unable to transfer the file in the video server</div><div class="t" style="left:705px;top:90px;font-size:11.5px;color:#e0e0e0;letter-spacing:-.45px">Etere: Error 01</div><div style="left:5px;top:104px;width:13px;height:13px;background:#232323;border:2.2px solid #fff"></div><svg style="left:22px;top:103px" width="16" height="16"><path d="M8.6 .8L15.6 12.6Q8.5 16.8 .9 12.8Z" fill="#c85a1e" opacity=".62"/><path d="M8.6 .8L15.6 12.6Q8.5 16.8 .9 12.8Z" fill="none" stroke="#3a1a08" stroke-width="1" stroke-dasharray="1 1.2" opacity=".8"/><path d="M9 3.5L10.5 8M7 7L6 11.5M10.5 10.5L11.5 12.5M4.5 12.5L9 13.5" stroke="#3a1a08" stroke-width="1" fill="none" stroke-dasharray="1 1.3" opacity=".75"/></svg><div class="t" style="left:40px;top:107px;width:655px;overflow:hidden;font-size:11.5px;color:#e0e0e0;letter-spacing:-.385px">Indicated event cannot be transmitted on MAM</div><div class="t" style="left:705px;top:107px;font-size:11.5px;color:#e0e0e0;letter-spacing:-.45px">Etere: Error 01</div><div style="left:5px;top:121px;width:13px;height:13px;background:#fff"></div><svg style="left:5px;top:121px" width="13" height="13"><defs><pattern id="p5_121" width="2" height="2" patternUnits="userSpaceOnUse"><rect width="1" height="1" fill="#111"/><rect x="1" y="1" width="1" height="1" fill="#111"/></pattern></defs><rect x="2" y="2" width="9" height="9" fill="url(#p5_121)"/><path d="M3.6 6L5.8 8.4L9.6 4" stroke="#fff" stroke-width="2.2" fill="none"/></svg><svg style="left:22px;top:120px" width="16" height="16"><path d="M8.6 .8L15.6 12.6Q8.5 16.8 .9 12.8Z" fill="#c85a1e" opacity=".62"/><path d="M8.6 .8L15.6 12.6Q8.5 16.8 .9 12.8Z" fill="none" stroke="#3a1a08" stroke-width="1" stroke-dasharray="1 1.2" opacity=".8"/><path d="M9 3.5L10.5 8M7 7L6 11.5M10.5 10.5L11.5 12.5M4.5 12.5L9 13.5" stroke="#3a1a08" stroke-width="1" fill="none" stroke-dasharray="1 1.3" opacity=".75"/></svg><div class="t" style="left:40px;top:124px;width:655px;overflow:hidden;font-size:11.5px;color:#e0e0e0;letter-spacing:-.385px">Indicated event is not ingested on the main and backup video server</div><div class="t" style="left:705px;top:124px;font-size:11.5px;color:#e0e0e0;letter-spacing:-.45px">Etere: Error 01</div><div style="left:5px;top:138px;width:13px;height:13px;background:#fff"></div><svg style="left:5px;top:138px" width="13" height="13"><defs><pattern id="p5_138" width="2" height="2" patternUnits="userSpaceOnUse"><rect width="1" height="1" fill="#111"/><rect x="1" y="1" width="1" height="1" fill="#111"/></pattern></defs><rect x="2" y="2" width="9" height="9" fill="url(#p5_138)"/><path d="M3.6 6L5.8 8.4L9.6 4" stroke="#fff" stroke-width="2.2" fill="none"/></svg><svg style="left:22px;top:137px" width="16" height="16"><path d="M8.6 .8L15.6 12.6Q8.5 16.8 .9 12.8Z" fill="#c85a1e" opacity=".62"/><path d="M8.6 .8L15.6 12.6Q8.5 16.8 .9 12.8Z" fill="none" stroke="#3a1a08" stroke-width="1" stroke-dasharray="1 1.2" opacity=".8"/><path d="M9 3.5L10.5 8M7 7L6 11.5M10.5 10.5L11.5 12.5M4.5 12.5L9 13.5" stroke="#3a1a08" stroke-width="1" fill="none" stroke-dasharray="1 1.3" opacity=".75"/></svg><div class="t" style="left:40px;top:141px;width:655px;overflow:hidden;font-size:11.5px;color:#e0e0e0;letter-spacing:-.385px">Indicated event is not ingested on the main video server.</div><div class="t" style="left:705px;top:141px;font-size:11.5px;color:#e0e0e0;letter-spacing:-.45px">Etere: Error 01</div><div style="left:5px;top:155px;width:13px;height:13px;background:#232323;border:2.2px solid #fff"></div><svg style="left:5px;top:155px" width="13" height="13"><path d="M3.4 6L5.7 8.6L9.8 3.6" stroke="#fff" stroke-width="2.1" fill="none"/></svg><svg style="left:22px;top:154px" width="16" height="16"><path d="M8.6 .8L15.6 12.6Q8.5 16.8 .9 12.8Z" fill="#c85a1e" opacity=".62"/><path d="M8.6 .8L15.6 12.6Q8.5 16.8 .9 12.8Z" fill="none" stroke="#3a1a08" stroke-width="1" stroke-dasharray="1 1.2" opacity=".8"/><path d="M9 3.5L10.5 8M7 7L6 11.5M10.5 10.5L11.5 12.5M4.5 12.5L9 13.5" stroke="#3a1a08" stroke-width="1" fill="none" stroke-dasharray="1 1.3" opacity=".75"/></svg><div class="t" style="left:40px;top:158px;width:655px;overflow:hidden;font-size:11.5px;color:#e0e0e0;letter-spacing:-.385px">Quality check hasn't still been effected</div><div class="t" style="left:705px;top:158px;font-size:11.5px;color:#e0e0e0;letter-spacing:-.45px">Etere: Error 01</div><div style="left:5px;top:172px;width:13px;height:13px;background:#232323;border:2.2px solid #fff"></div><svg style="left:5px;top:172px" width="13" height="13"><path d="M3.4 6L5.7 8.6L9.8 3.6" stroke="#fff" stroke-width="2.1" fill="none"/></svg><svg style="left:22px;top:171px" width="16" height="16"><path d="M8.6 .8L15.6 12.6Q8.5 16.8 .9 12.8Z" fill="#c85a1e" opacity=".62"/><path d="M8.6 .8L15.6 12.6Q8.5 16.8 .9 12.8Z" fill="none" stroke="#3a1a08" stroke-width="1" stroke-dasharray="1 1.2" opacity=".8"/><path d="M9 3.5L10.5 8M7 7L6 11.5M10.5 10.5L11.5 12.5M4.5 12.5L9 13.5" stroke="#3a1a08" stroke-width="1" fill="none" stroke-dasharray="1 1.3" opacity=".75"/></svg><div class="t" style="left:40px;top:175px;width:655px;overflow:hidden;font-size:11.5px;color:#e0e0e0;letter-spacing:-.385px">File is not correctly ingested. Quality level of the file is lower than the minimum</div><div class="t" style="left:705px;top:175px;font-size:11.5px;color:#e0e0e0;letter-spacing:-.45px">Etere: Error 01</div><div style="left:5px;top:189px;width:13px;height:13px;background:#232323;border:2.2px solid #fff"></div><svg style="left:5px;top:189px" width="13" height="13"><path d="M3.4 6L5.7 8.6L9.8 3.6" stroke="#fff" stroke-width="2.1" fill="none"/></svg><svg style="left:22px;top:188px" width="16" height="16"><path d="M8.6 .8L15.6 12.6Q8.5 16.8 .9 12.8Z" fill="#c85a1e" opacity=".62"/><path d="M8.6 .8L15.6 12.6Q8.5 16.8 .9 12.8Z" fill="none" stroke="#3a1a08" stroke-width="1" stroke-dasharray="1 1.2" opacity=".8"/><path d="M9 3.5L10.5 8M7 7L6 11.5M10.5 10.5L11.5 12.5M4.5 12.5L9 13.5" stroke="#3a1a08" stroke-width="1" fill="none" stroke-dasharray="1 1.3" opacity=".75"/></svg><div class="t" style="left:40px;top:192px;width:655px;overflow:hidden;font-size:11.5px;color:#e0e0e0;letter-spacing:-.385px">The file is not ok to broadcast</div><div class="t" style="left:705px;top:192px;font-size:11.5px;color:#e0e0e0;letter-spacing:-.45px">Etere: Error 01</div><div style="left:5px;top:206px;width:13px;height:13px;background:#232323;border:2.2px solid #fff"></div><svg style="left:5px;top:206px" width="13" height="13"><path d="M3.4 6L5.7 8.6L9.8 3.6" stroke="#fff" stroke-width="2.1" fill="none"/></svg><svg style="left:22px;top:205px" width="16" height="16"><path d="M8.6 .8L15.6 12.6Q8.5 16.8 .9 12.8Z" fill="#f04a1e" opacity="1"/><path d="M8.6 .8L15.6 12.6Q8.5 16.8 .9 12.8Z" fill="none" stroke="#8a2008" stroke-width="1" stroke-dasharray="1 1.2" opacity=".8"/><path d="M9 3.5L10.5 8M7 7L6 11.5M10.5 10.5L11.5 12.5M4.5 12.5L9 13.5" stroke="#8a2008" stroke-width="1" fill="none" stroke-dasharray="1 1.3" opacity=".75"/></svg><div class="t" style="left:40px;top:209px;width:655px;overflow:hidden;font-size:11.5px;color:#e0e0e0;letter-spacing:-.385px">Indicated event is ingested on the video server. It is necessary to check it</div><div class="t" style="left:705px;top:209px;font-size:11.5px;color:#e0e0e0;letter-spacing:-.45px">Etere: Error 02</div><div style="left:5px;top:223px;width:13px;height:13px;background:#232323;border:2.2px solid #fff"></div><svg style="left:5px;top:223px" width="13" height="13"><path d="M3.4 6L5.7 8.6L9.8 3.6" stroke="#fff" stroke-width="2.1" fill="none"/></svg><svg style="left:22px;top:222px" width="16" height="16"><path d="M8.6 .8L15.6 12.6Q8.5 16.8 .9 12.8Z" fill="#f04a1e" opacity="1"/><path d="M8.6 .8L15.6 12.6Q8.5 16.8 .9 12.8Z" fill="none" stroke="#8a2008" stroke-width="1" stroke-dasharray="1 1.2" opacity=".8"/><path d="M9 3.5L10.5 8M7 7L6 11.5M10.5 10.5L11.5 12.5M4.5 12.5L9 13.5" stroke="#8a2008" stroke-width="1" fill="none" stroke-dasharray="1 1.3" opacity=".75"/></svg><div class="t" style="left:40px;top:226px;width:655px;overflow:hidden;font-size:11.5px;color:#e0e0e0;letter-spacing:-.385px">Indicated event is ingested on the video server. It is necessary to check it</div><div class="t" style="left:705px;top:226px;font-size:11.5px;color:#e0e0e0;letter-spacing:-.45px">Etere: Error 02</div><div style="left:5px;top:240px;width:13px;height:13px;background:#232323;border:2.2px solid #fff"></div><svg style="left:5px;top:240px" width="13" height="13"><path d="M3.4 6L5.7 8.6L9.8 3.6" stroke="#fff" stroke-width="2.1" fill="none"/></svg><svg style="left:22px;top:239px" width="16" height="16"><path d="M8.6 .8L15.6 12.6Q8.5 16.8 .9 12.8Z" fill="#f04a1e" opacity="1"/><path d="M8.6 .8L15.6 12.6Q8.5 16.8 .9 12.8Z" fill="none" stroke="#8a2008" stroke-width="1" stroke-dasharray="1 1.2" opacity=".8"/><path d="M9 3.5L10.5 8M7 7L6 11.5M10.5 10.5L11.5 12.5M4.5 12.5L9 13.5" stroke="#8a2008" stroke-width="1" fill="none" stroke-dasharray="1 1.3" opacity=".75"/></svg><div class="t" style="left:40px;top:243px;width:655px;overflow:hidden;font-size:11.5px;color:#e0e0e0;letter-spacing:-.385px">The event selected is not ingested.</div><div class="t" style="left:705px;top:243px;font-size:11.5px;color:#e0e0e0;letter-spacing:-.45px">Etere: Error 02</div><div style="left:5px;top:257px;width:13px;height:13px;background:#fff"></div><svg style="left:5px;top:257px" width="13" height="13"><defs><pattern id="p5_257" width="2" height="2" patternUnits="userSpaceOnUse"><rect width="1" height="1" fill="#111"/><rect x="1" y="1" width="1" height="1" fill="#111"/></pattern></defs><rect x="2" y="2" width="9" height="9" fill="url(#p5_257)"/><path d="M3.6 6L5.8 8.4L9.6 4" stroke="#fff" stroke-width="2.2" fill="none"/></svg><svg style="left:22px;top:256px" width="16" height="16"><path d="M8.6 .8L15.6 12.6Q8.5 16.8 .9 12.8Z" fill="#f04a1e" opacity="1"/><path d="M8.6 .8L15.6 12.6Q8.5 16.8 .9 12.8Z" fill="none" stroke="#8a2008" stroke-width="1" stroke-dasharray="1 1.2" opacity=".8"/><path d="M9 3.5L10.5 8M7 7L6 11.5M10.5 10.5L11.5 12.5M4.5 12.5L9 13.5" stroke="#8a2008" stroke-width="1" fill="none" stroke-dasharray="1 1.3" opacity=".75"/></svg><div class="t" style="left:40px;top:260px;width:655px;overflow:hidden;font-size:11.5px;color:#e0e0e0;letter-spacing:-.385px">The event is a Live event with no assigned input</div><div class="t" style="left:705px;top:260px;font-size:11.5px;color:#e0e0e0;letter-spacing:-.45px">Etere: Error 02</div><div style="left:5px;top:274px;width:13px;height:13px;background:#232323;border:2.2px solid #fff"></div><svg style="left:5px;top:274px" width="13" height="13"><path d="M3.4 6L5.7 8.6L9.8 3.6" stroke="#fff" stroke-width="2.1" fill="none"/></svg><svg style="left:22px;top:273px" width="16" height="16"><path d="M8.6 .8L15.6 12.6Q8.5 16.8 .9 12.8Z" fill="#f04a1e" opacity="1"/><path d="M8.6 .8L15.6 12.6Q8.5 16.8 .9 12.8Z" fill="none" stroke="#8a2008" stroke-width="1" stroke-dasharray="1 1.2" opacity=".8"/><path d="M9 3.5L10.5 8M7 7L6 11.5M10.5 10.5L11.5 12.5M4.5 12.5L9 13.5" stroke="#8a2008" stroke-width="1" fill="none" stroke-dasharray="1 1.3" opacity=".75"/></svg><div class="t" style="left:40px;top:277px;width:655px;overflow:hidden;font-size:11.5px;color:#e0e0e0;letter-spacing:-.385px">This event is split but it is not scheduled near to its cluster. See the cluster</div><div class="t" style="left:705px;top:277px;font-size:11.5px;color:#e0e0e0;letter-spacing:-.45px">Etere: Error 02</div><div style="left:5px;top:291px;width:13px;height:13px;background:#232323;border:2.2px solid #fff"></div><svg style="left:5px;top:291px" width="13" height="13"><path d="M3.4 6L5.7 8.6L9.8 3.6" stroke="#fff" stroke-width="2.1" fill="none"/></svg><svg style="left:22px;top:290px" width="16" height="16"><path d="M8.6 .8L15.6 12.6Q8.5 16.8 .9 12.8Z" fill="#f04a1e" opacity="1"/><path d="M8.6 .8L15.6 12.6Q8.5 16.8 .9 12.8Z" fill="none" stroke="#8a2008" stroke-width="1" stroke-dasharray="1 1.2" opacity=".8"/><path d="M9 3.5L10.5 8M7 7L6 11.5M10.5 10.5L11.5 12.5M4.5 12.5L9 13.5" stroke="#8a2008" stroke-width="1" fill="none" stroke-dasharray="1 1.3" opacity=".75"/></svg><div class="t" style="left:40px;top:294px;width:655px;overflow:hidden;font-size:11.5px;color:#e0e0e0;letter-spacing:-.385px">Two consecutive clusters can not be split. Insert an event to separate</div><div class="t" style="left:705px;top:294px;font-size:11.5px;color:#e0e0e0;letter-spacing:-.45px">Etere: Error 02</div><div style="left:5px;top:308px;width:13px;height:13px;background:#232323;border:2.2px solid #fff"></div><svg style="left:5px;top:308px" width="13" height="13"><path d="M3.4 6L5.7 8.6L9.8 3.6" stroke="#fff" stroke-width="2.1" fill="none"/></svg><svg style="left:22px;top:307px" width="16" height="16"><path d="M8.6 .8L15.6 12.6Q8.5 16.8 .9 12.8Z" fill="#f04a1e" opacity="1"/><path d="M8.6 .8L15.6 12.6Q8.5 16.8 .9 12.8Z" fill="none" stroke="#8a2008" stroke-width="1" stroke-dasharray="1 1.2" opacity=".8"/><path d="M9 3.5L10.5 8M7 7L6 11.5M10.5 10.5L11.5 12.5M4.5 12.5L9 13.5" stroke="#8a2008" stroke-width="1" fill="none" stroke-dasharray="1 1.3" opacity=".75"/></svg><div class="t" style="left:40px;top:311px;width:655px;overflow:hidden;font-size:11.5px;color:#e0e0e0;letter-spacing:-.385px">No events have been scheduled in Ad Insertion networks. Check</div><div class="t" style="left:705px;top:311px;font-size:11.5px;color:#e0e0e0;letter-spacing:-.45px">Etere: Error 02</div><div style="left:5px;top:325px;width:13px;height:13px;background:#232323;border:2.2px solid #fff"></div><svg style="left:5px;top:325px" width="13" height="13"><path d="M3.4 6L5.7 8.6L9.8 3.6" stroke="#fff" stroke-width="2.1" fill="none"/></svg><svg style="left:22px;top:324px" width="16" height="16"><path d="M8.6 .8L15.6 12.6Q8.5 16.8 .9 12.8Z" fill="#f04a1e" opacity="1"/><path d="M8.6 .8L15.6 12.6Q8.5 16.8 .9 12.8Z" fill="none" stroke="#8a2008" stroke-width="1" stroke-dasharray="1 1.2" opacity=".8"/><path d="M9 3.5L10.5 8M7 7L6 11.5M10.5 10.5L11.5 12.5M4.5 12.5L9 13.5" stroke="#8a2008" stroke-width="1" fill="none" stroke-dasharray="1 1.3" opacity=".75"/></svg><div class="t" style="left:40px;top:328px;width:655px;overflow:hidden;font-size:11.5px;color:#e0e0e0;letter-spacing:-.385px">Splits does not have the same duration. Check all clusters</div><div class="t" style="left:705px;top:328px;font-size:11.5px;color:#e0e0e0;letter-spacing:-.45px">Etere: Error 02</div><div style="left:5px;top:342px;width:13px;height:13px;background:#232323;border:2.2px solid #fff"></div><svg style="left:5px;top:342px" width="13" height="13"><path d="M3.4 6L5.7 8.6L9.8 3.6" stroke="#fff" stroke-width="2.1" fill="none"/></svg><svg style="left:22px;top:341px" width="16" height="16"><path d="M8.6 .8L15.6 12.6Q8.5 16.8 .9 12.8Z" fill="#f4c818" opacity="1"/><path d="M8.6 .8L15.6 12.6Q8.5 16.8 .9 12.8Z" fill="none" stroke="#7a5a00" stroke-width="1" stroke-dasharray="1 1.2" opacity=".8"/><path d="M9 3.5L10.5 8M7 7L6 11.5M10.5 10.5L11.5 12.5M4.5 12.5L9 13.5" stroke="#7a5a00" stroke-width="1" fill="none" stroke-dasharray="1 1.3" opacity=".75"/></svg><div class="t" style="left:40px;top:345px;width:655px;overflow:hidden;font-size:11.5px;color:#e0e0e0;letter-spacing:-.385px">Indicated event contains video faults It is advisable to explode</div><div class="t" style="left:705px;top:345px;font-size:11.5px;color:#e0e0e0;letter-spacing:-.45px">Etere: Error 03</div><div style="left:5px;top:359px;width:13px;height:13px;background:#232323;border:2.2px solid #fff"></div><svg style="left:5px;top:359px" width="13" height="13"><path d="M3.4 6L5.7 8.6L9.8 3.6" stroke="#fff" stroke-width="2.1" fill="none"/></svg><svg style="left:22px;top:358px" width="16" height="16"><path d="M8.6 .8L15.6 12.6Q8.5 16.8 .9 12.8Z" fill="#f4c818" opacity="1"/><path d="M8.6 .8L15.6 12.6Q8.5 16.8 .9 12.8Z" fill="none" stroke="#7a5a00" stroke-width="1" stroke-dasharray="1 1.2" opacity=".8"/><path d="M9 3.5L10.5 8M7 7L6 11.5M10.5 10.5L11.5 12.5M4.5 12.5L9 13.5" stroke="#7a5a00" stroke-width="1" fill="none" stroke-dasharray="1 1.3" opacity=".75"/></svg><div class="t" style="left:40px;top:362px;width:655px;overflow:hidden;font-size:11.5px;color:#e0e0e0;letter-spacing:-.385px">This event has visible segments It is advisable to explode the</div><div class="t" style="left:705px;top:362px;font-size:11.5px;color:#e0e0e0;letter-spacing:-.45px">Etere: Error 03</div><div style="left:5px;top:376px;width:13px;height:13px;background:#232323;border:2.2px solid #fff"></div><svg style="left:5px;top:376px" width="13" height="13"><path d="M3.4 6L5.7 8.6L9.8 3.6" stroke="#fff" stroke-width="2.1" fill="none"/></svg><svg style="left:22px;top:375px" width="16" height="16"><path d="M8.6 .8L15.6 12.6Q8.5 16.8 .9 12.8Z" fill="#c85a1e" opacity=".62"/><path d="M8.6 .8L15.6 12.6Q8.5 16.8 .9 12.8Z" fill="none" stroke="#3a1a08" stroke-width="1" stroke-dasharray="1 1.2" opacity=".8"/><path d="M9 3.5L10.5 8M7 7L6 11.5M10.5 10.5L11.5 12.5M4.5 12.5L9 13.5" stroke="#3a1a08" stroke-width="1" fill="none" stroke-dasharray="1 1.3" opacity=".75"/><rect x="5" y="11.5" width="11" height="4.5" fill="#eee"/><path d="M6.5 14H14.5" stroke="#333" stroke-width="1.2" stroke-dasharray="1.5 .7"/></svg><div class="t" style="left:40px;top:379px;width:655px;overflow:hidden;font-size:11.5px;color:#e0e0e0;letter-spacing:-.385px">Indicated event has subtitles but the subtitles file still hasn't been</div><div class="t" style="left:705px;top:379px;font-size:11.5px;color:#e0e0e0;letter-spacing:-.45px">Etere: Error 03</div><div style="left:5px;top:393px;width:13px;height:13px;background:#232323;border:2.2px solid #fff"></div><svg style="left:5px;top:393px" width="13" height="13"><path d="M3.4 6L5.7 8.6L9.8 3.6" stroke="#fff" stroke-width="2.1" fill="none"/></svg><svg style="left:22px;top:392px" width="16" height="16"><path d="M8.6 .8L15.6 12.6Q8.5 16.8 .9 12.8Z" fill="#f4c818" opacity="1"/><path d="M8.6 .8L15.6 12.6Q8.5 16.8 .9 12.8Z" fill="none" stroke="#7a5a00" stroke-width="1" stroke-dasharray="1 1.2" opacity=".8"/><path d="M9 3.5L10.5 8M7 7L6 11.5M10.5 10.5L11.5 12.5M4.5 12.5L9 13.5" stroke="#7a5a00" stroke-width="1" fill="none" stroke-dasharray="1 1.3" opacity=".75"/></svg><div class="t" style="left:40px;top:396px;width:655px;overflow:hidden;font-size:11.5px;color:#e0e0e0;letter-spacing:-.385px">The event indicated has been modified. Select the event and</div><div class="t" style="left:705px;top:396px;font-size:11.5px;color:#e0e0e0;letter-spacing:-.45px">Etere: Error 03</div><div style="left:5px;top:410px;width:13px;height:13px;background:#232323;border:2.2px solid #fff"></div><svg style="left:5px;top:410px" width="13" height="13"><path d="M3.4 6L5.7 8.6L9.8 3.6" stroke="#fff" stroke-width="2.1" fill="none"/></svg><svg style="left:22px;top:409px" width="16" height="16"><path d="M8.6 .8L15.6 12.6Q8.5 16.8 .9 12.8Z" fill="#f4c818" opacity="1"/><path d="M8.6 .8L15.6 12.6Q8.5 16.8 .9 12.8Z" fill="none" stroke="#7a5a00" stroke-width="1" stroke-dasharray="1 1.2" opacity=".8"/><path d="M9 3.5L10.5 8M7 7L6 11.5M10.5 10.5L11.5 12.5M4.5 12.5L9 13.5" stroke="#7a5a00" stroke-width="1" fill="none" stroke-dasharray="1 1.3" opacity=".75"/></svg><div class="t" style="left:40px;top:413px;width:655px;overflow:hidden;font-size:11.5px;color:#e0e0e0;letter-spacing:-.385px">The event indicated has been modified. It is necessary to effect</div><div class="t" style="left:705px;top:413px;font-size:11.5px;color:#e0e0e0;letter-spacing:-.45px">Etere: Error 03</div><div style="left:5px;top:427px;width:13px;height:13px;background:#232323;border:2.2px solid #fff"></div><svg style="left:5px;top:427px" width="13" height="13"><path d="M3.4 6L5.7 8.6L9.8 3.6" stroke="#fff" stroke-width="2.1" fill="none"/></svg><svg style="left:22px;top:426px" width="16" height="16"><path d="M8.6 .8L15.6 12.6Q8.5 16.8 .9 12.8Z" fill="#f4c818" opacity="1"/><path d="M8.6 .8L15.6 12.6Q8.5 16.8 .9 12.8Z" fill="none" stroke="#7a5a00" stroke-width="1" stroke-dasharray="1 1.2" opacity=".8"/><path d="M9 3.5L10.5 8M7 7L6 11.5M10.5 10.5L11.5 12.5M4.5 12.5L9 13.5" stroke="#7a5a00" stroke-width="1" fill="none" stroke-dasharray="1 1.3" opacity=".75"/></svg><div class="t" style="left:40px;top:430px;width:655px;overflow:hidden;font-size:11.5px;color:#e0e0e0;letter-spacing:-.385px">Indicated event is ingested on the video server. It is necessary</div><div class="t" style="left:705px;top:430px;font-size:11.5px;color:#e0e0e0;letter-spacing:-.45px">Etere: Error 03</div><div style="left:5px;top:444px;width:13px;height:13px;background:#232323;border:2.2px solid #fff"></div><svg style="left:5px;top:444px" width="13" height="13"><path d="M3.4 6L5.7 8.6L9.8 3.6" stroke="#fff" stroke-width="2.1" fill="none"/></svg><svg style="left:22px;top:443px" width="16" height="16"><path d="M8.6 .8L15.6 12.6Q8.5 16.8 .9 12.8Z" fill="#f4c818" opacity="1"/><path d="M8.6 .8L15.6 12.6Q8.5 16.8 .9 12.8Z" fill="none" stroke="#7a5a00" stroke-width="1" stroke-dasharray="1 1.2" opacity=".8"/><path d="M9 3.5L10.5 8M7 7L6 11.5M10.5 10.5L11.5 12.5M4.5 12.5L9 13.5" stroke="#7a5a00" stroke-width="1" fill="none" stroke-dasharray="1 1.3" opacity=".75"/></svg><div class="t" style="left:40px;top:447px;width:655px;overflow:hidden;font-size:11.5px;color:#e0e0e0;letter-spacing:-.385px">Indicated event is not ingested on the main video server.</div><div class="t" style="left:705px;top:447px;font-size:11.5px;color:#e0e0e0;letter-spacing:-.45px">Etere: Error 03</div><div style="left:5px;top:461px;width:13px;height:13px;background:#232323;border:2.2px solid #fff"></div><svg style="left:22px;top:460px" width="16" height="16"><path d="M8.6 .8L15.6 12.6Q8.5 16.8 .9 12.8Z" fill="#f4c818" opacity="1"/><path d="M8.6 .8L15.6 12.6Q8.5 16.8 .9 12.8Z" fill="none" stroke="#7a5a00" stroke-width="1" stroke-dasharray="1 1.2" opacity=".8"/><path d="M9 3.5L10.5 8M7 7L6 11.5M10.5 10.5L11.5 12.5M4.5 12.5L9 13.5" stroke="#7a5a00" stroke-width="1" fill="none" stroke-dasharray="1 1.3" opacity=".75"/></svg><div class="t" style="left:40px;top:464px;width:655px;overflow:hidden;font-size:11.5px;color:#e0e0e0;letter-spacing:-.385px">Indicated event is not ingested on the backup video server.</div><div class="t" style="left:705px;top:464px;font-size:11.5px;color:#e0e0e0;letter-spacing:-.45px">Etere: Error 03</div><div style="left:5px;top:478px;width:13px;height:13px;background:#232323;border:2.2px solid #fff"></div><svg style="left:22px;top:477px" width="16" height="16"><path d="M8.6 .8L15.6 12.6Q8.5 16.8 .9 12.8Z" fill="#f4c818" opacity="1"/><path d="M8.6 .8L15.6 12.6Q8.5 16.8 .9 12.8Z" fill="none" stroke="#7a5a00" stroke-width="1" stroke-dasharray="1 1.2" opacity=".8"/><path d="M9 3.5L10.5 8M7 7L6 11.5M10.5 10.5L11.5 12.5M4.5 12.5L9 13.5" stroke="#7a5a00" stroke-width="1" fill="none" stroke-dasharray="1 1.3" opacity=".75"/></svg><div class="t" style="left:40px;top:481px;width:697px;overflow:hidden;font-size:11.5px;color:#e0e0e0;letter-spacing:-.385px">The variable (loop) event's duration is less than: 00:01:00.00 It is recommended that the duration is increased for a correct on-air broadcas...</div><div class="t" style="left:705px;top:481px;font-size:11.5px;color:#e0e0e0;letter-spacing:-.45px">Etere: Error 03</div><div style="left:5px;top:495px;width:13px;height:13px;background:#232323;border:2.2px solid #fff"></div><svg style="left:5px;top:495px" width="13" height="13"><path d="M3.4 6L5.7 8.6L9.8 3.6" stroke="#fff" stroke-width="2.1" fill="none"/></svg><svg style="left:22px;top:494px" width="16" height="16"><path d="M8.6 .8L15.6 12.6Q8.5 16.8 .9 12.8Z" fill="#f4c818" opacity="1"/><path d="M8.6 .8L15.6 12.6Q8.5 16.8 .9 12.8Z" fill="none" stroke="#7a5a00" stroke-width="1" stroke-dasharray="1 1.2" opacity=".8"/><path d="M9 3.5L10.5 8M7 7L6 11.5M10.5 10.5L11.5 12.5M4.5 12.5L9 13.5" stroke="#7a5a00" stroke-width="1" fill="none" stroke-dasharray="1 1.3" opacity=".75"/></svg><div class="t" style="left:40px;top:498px;width:655px;overflow:hidden;font-size:11.5px;color:#e0e0e0;letter-spacing:-.385px">The indicated event has a SOM inferior to the physical start of the file</div><div class="t" style="left:705px;top:498px;font-size:11.5px;color:#e0e0e0;letter-spacing:-.45px">Etere: Error 03</div></div><div style="left:1284px;top:317px;width:16px;height:529px;background:#232323"></div><svg style="left:1287px;top:322px" width="8" height="8"><path d="M0 5L4 0L8 5Z" fill="#9a9a9a"/></svg><svg style="left:1287px;top:834px" width="8" height="8"><path d="M0 0L8 0L4 5Z" fill="#9a9a9a"/></svg><div style="left:1285px;top:336px;width:13px;height:337px;background:#7e7e7e;border-radius:5px"></div><div style="left:387px;top:846px;width:913px;height:15px;background:#232323"></div><svg style="left:391px;top:849px" width="8" height="8"><path d="M5 0L5 8L0 4Z" fill="#9a9a9a"/></svg><svg style="left:1271px;top:849px" width="8" height="8"><path d="M0 0L0 8L5 4Z" fill="#9a9a9a"/></svg><div style="left:405px;top:847px;width:642px;height:12px;background:#7e7e7e;border-radius:5px"></div><div style="left:1284px;top:846px;width:16px;height:15px;background:#3a3a3a"></div><div style="left:386px;top:870px;width:915px;height:66px;background:#232323;border:1px solid #555;border-top-color:#333;border-left-color:#333"></div><div class="t" style="left:387px;top:874px;font-size:11.5px;color:#d8d8d8;letter-spacing:-.4px">The event indicated has expired.</div><svg style="left:1287px;top:874px" width="8" height="8"><path d="M0 5L4 0L8 5Z" fill="#444"/></svg><svg style="left:1287px;top:905px" width="8" height="8"><path d="M0 0L8 0L4 5Z" fill="#444"/></svg><svg style="left:391px;top:922px" width="8" height="8"><path d="M5 0L5 8L0 4Z" fill="#444"/></svg><svg style="left:1271px;top:922px" width="8" height="8"><path d="M0 0L0 8L5 4Z" fill="#444"/></svg><div style="left:1284px;top:920px;width:16px;height:15px;background:#3a3a3a"></div><svg style="left:0;top:0" width="1920" height="1039"><path d="M586 304L753 448" stroke="#e8222c" stroke-width="3.4" fill="none"/></svg><div style="left:713px;top:446px;width:384px;height:379px;background:#e8222c"></div><div style="left:716px;top:449px;width:378px;height:373px;background:#484848;border:1px solid #5a5a5a"></div><div style="left:717px;top:450px;width:376px;height:26px;background:linear-gradient(#585858,#454545)"></div><svg style="left:722px;top:457px" width="15" height="13"><rect x="0" y="0" width="15" height="4.5" rx="1" fill="#3a8ee6"/><path d="M2 1.5H13" stroke="#9cc8f4" stroke-width="1" stroke-dasharray="1 1"/><rect x="0" y="4.5" width="15" height="8.5" fill="#f48ab0"/><path d="M2.5 4.5V13M5 4.5V13M7.5 4.5V13M10 4.5V13M12.5 4.5V13" stroke="#fff" stroke-width="1"/><rect x="0" y="11.5" width="15" height="1.5" fill="#f8a8c4"/></svg><div class="t" style="left:741px;top:456px;font-weight:bold;font-size:11px;color:#7c7c7c;font-family:'DejaVu Sans',sans-serif;letter-spacing:-.4px">Sound</div><div class="wb" style="left:1034px;top:453px;width:17px;height:17px;"></div><svg style="left:1034px;top:453px" width="17" height="17"><rect x="5.5" y="11.5" width="5" height="2" fill="#989898"/></svg><div class="wb" style="left:1053px;top:453px;width:17px;height:17px;"></div><svg style="left:1053px;top:453px" width="17" height="17"><rect x="4.0" y="5.0" width="9" height="8" fill="none" stroke="#989898" stroke-width="1"/><rect x="3.5" y="4.5" width="10" height="2" fill="#989898"/></svg><div class="wb" style="left:1072px;top:453px;width:17px;height:17px;"></div><svg style="left:1072px;top:453px" width="17" height="17"><path d="M5.0 5.0L12.0 12.0M12.0 5.0L5.0 12.0" stroke="#989898" stroke-width="1.6" fill="none"/></svg><div style="left:721px;top:475px;width:368px;height:342px;border:1px solid #3a3a3a;border-top-color:#626262;background:#444"></div><div class="t" style="left:727px;top:480px;font-size:12.5px;color:#c4c4c4">Edit</div><div class="t" style="left:757px;top:480px;font-size:12.5px;color:#c4c4c4">Show</div><div class="t" style="left:796px;top:480px;font-size:12.5px;color:#c4c4c4">Help</div><div class="btn" style="left:723px;top:497px;width:21px;height:20px;"></div><div class="btn" style="left:746px;top:497px;width:21px;height:20px;"></div><div class="btn" style="left:769px;top:497px;width:21px;height:20px;"></div><div class="btn" style="left:800px;top:497px;width:21px;height:20px;"></div><div style="left:795px;top:499px;width:1px;height:16px;background:#333"></div><svg style="left:723px;top:497px" width="21" height="20"><path d="M4 3.5L17 10L4 16.5Z" fill="#16326e" stroke="#7aa8e8" stroke-width="1.2"/></svg><svg style="left:746px;top:497px" width="21" height="20"><path d="M4 2H13L17 6V18H4Z" fill="#f4f6fa" stroke="#8a9ab8" stroke-width="1"/><path d="M7 10L10 14L15 5" stroke="#e02818" stroke-width="2" fill="none"/></svg><svg style="left:769px;top:497px" width="21" height="20"><path d="M4 2H13L17 6V18H4Z" fill="#f4f6fa" stroke="#8a9ab8" stroke-width="1"/><path d="M7 9A4 4 0 0 1 14 8M14 12A4 4 0 0 1 7 13" stroke="#18a028" stroke-width="2" fill="none"/><path d="M14 5V9H10ZM7 16V12H11Z" fill="#18a028"/></svg><svg style="left:800px;top:497px" width="21" height="20"><rect x="1" y="1" width="19" height="18" rx="2" fill="#3ab0f4"/><rect x="5" y="4" width="11" height="9" fill="none" stroke="#e8f6ff" stroke-width="1.2"/><path d="M3 16H18" stroke="#e8f6ff" stroke-width="1.2"/><path d="M8 7H9V11M11 7H13V9H12V11" stroke="#e8f6ff" stroke-width=".9" fill="none"/></svg><div style="left:724px;top:529px;width:362px;height:284px;background:#232323;border:1px solid #585858;border-top-color:#303030;border-left-color:#303030"></div><div style="left:725px;top:530px;width:360px;height:282px;overflow:hidden"><div style="left:12px;top:0px;width:1px;height:282px;background:repeating-linear-gradient(#777 0 1px,transparent 1px 2px)"></div><div style="left:31px;top:0px;width:1px;height:130px;background:repeating-linear-gradient(#777 0 1px,transparent 1px 2px)"></div><div style="left:31px;top:145px;width:1px;height:9px;background:repeating-linear-gradient(#777 0 1px,transparent 1px 2px)"></div><div style="left:31px;top:177px;width:1px;height:57px;background:repeating-linear-gradient(#777 0 1px,transparent 1px 2px)"></div><div style="left:31px;top:257px;width:1px;height:25px;background:repeating-linear-gradient(#777 0 1px,transparent 1px 2px)"></div><div style="left:31px;top:9px;width:11px;height:1px;background:repeating-linear-gradient(90deg,#777 0 1px,transparent 1px 2px)"></div><svg style="left:42px;top:1px" width="15" height="16"><path d="M1.5 3L3 1.5" stroke="#ddd" stroke-width="1.2"/><ellipse cx="6.8" cy="6.2" rx="5.2" ry="5.6" fill="url(#spg)" stroke="#7a7a7a" stroke-width=".7"/><ellipse cx="5.6" cy="4.6" rx="1.8" ry="1.5" fill="#f4f4f4" opacity=".85"/><path d="M7 12L11 14.5L13.2 11M9.5 15L12.5 13.5" stroke="#cfcfcf" stroke-width="1.3" fill="none"/><circle cx="10.5" cy="11.5" r="3.6" fill="#fff" stroke="#e03818" stroke-width="1.6"/><path d="M8 9L13 14" stroke="#e03818" stroke-width="1.6"/></svg><div class="t" style="left:63px;top:4px;font-size:11.5px;color:#d8d8d8;letter-spacing:-.4px">Exit Windows</div><div style="left:31px;top:25px;width:11px;height:1px;background:repeating-linear-gradient(90deg,#777 0 1px,transparent 1px 2px)"></div><svg style="left:42px;top:17px" width="15" height="16"><path d="M1.5 3L3 1.5" stroke="#ddd" stroke-width="1.2"/><ellipse cx="6.8" cy="6.2" rx="5.2" ry="5.6" fill="url(#spg)" stroke="#7a7a7a" stroke-width=".7"/><ellipse cx="5.6" cy="4.6" rx="1.8" ry="1.5" fill="#f4f4f4" opacity=".85"/><path d="M7 12L11 14.5L13.2 11M9.5 15L12.5 13.5" stroke="#cfcfcf" stroke-width="1.3" fill="none"/></svg><div class="t" style="left:63px;top:20px;font-size:11.5px;color:#d8d8d8;letter-spacing:-.4px">Critical Stop</div><div style="left:31px;top:41px;width:11px;height:1px;background:repeating-linear-gradient(90deg,#777 0 1px,transparent 1px 2px)"></div><svg style="left:42px;top:33px" width="15" height="16"><path d="M1.5 3L3 1.5" stroke="#ddd" stroke-width="1.2"/><ellipse cx="6.8" cy="6.2" rx="5.2" ry="5.6" fill="url(#spg)" stroke="#7a7a7a" stroke-width=".7"/><ellipse cx="5.6" cy="4.6" rx="1.8" ry="1.5" fill="#f4f4f4" opacity=".85"/><path d="M7 12L11 14.5L13.2 11M9.5 15L12.5 13.5" stroke="#cfcfcf" stroke-width="1.3" fill="none"/></svg><div class="t" style="left:63px;top:36px;font-size:11.5px;color:#d8d8d8;letter-spacing:-.4px">System Notification</div><div style="left:31px;top:57px;width:11px;height:1px;background:repeating-linear-gradient(90deg,#777 0 1px,transparent 1px 2px)"></div><svg style="left:42px;top:49px" width="15" height="16"><path d="M1.5 3L3 1.5" stroke="#ddd" stroke-width="1.2"/><ellipse cx="6.8" cy="6.2" rx="5.2" ry="5.6" fill="url(#spg)" stroke="#7a7a7a" stroke-width=".7"/><ellipse cx="5.6" cy="4.6" rx="1.8" ry="1.5" fill="#f4f4f4" opacity=".85"/><path d="M7 12L11 14.5L13.2 11M9.5 15L12.5 13.5" stroke="#cfcfcf" stroke-width="1.3" fill="none"/><circle cx="10.5" cy="11.5" r="3.6" fill="#fff" stroke="#e03818" stroke-width="1.6"/><path d="M8 9L13 14" stroke="#e03818" stroke-width="1.6"/></svg><div class="t" style="left:63px;top:52px;font-size:11.5px;color:#d8d8d8;letter-spacing:-.4px">Question</div><div style="left:31px;top:73px;width:11px;height:1px;background:repeating-linear-gradient(90deg,#777 0 1px,transparent 1px 2px)"></div><svg style="left:42px;top:65px" width="15" height="16"><path d="M1.5 3L3 1.5" stroke="#ddd" stroke-width="1.2"/><ellipse cx="6.8" cy="6.2" rx="5.2" ry="5.6" fill="url(#spg)" stroke="#7a7a7a" stroke-width=".7"/><ellipse cx="5.6" cy="4.6" rx="1.8" ry="1.5" fill="#f4f4f4" opacity=".85"/><path d="M7 12L11 14.5L13.2 11M9.5 15L12.5 13.5" stroke="#cfcfcf" stroke-width="1.3" fill="none"/><circle cx="10.5" cy="11.5" r="3.6" fill="#fff" stroke="#e03818" stroke-width="1.6"/><path d="M8 9L13 14" stroke="#e03818" stroke-width="1.6"/></svg><div class="t" style="left:63px;top:68px;font-size:11.5px;color:#d8d8d8;letter-spacing:-.4px">Windows Logoff</div><div style="left:31px;top:89px;width:11px;height:1px;background:repeating-linear-gradient(90deg,#777 0 1px,transparent 1px 2px)"></div><svg style="left:42px;top:81px" width="15" height="16"><path d="M1.5 3L3 1.5" stroke="#ddd" stroke-width="1.2"/><ellipse cx="6.8" cy="6.2" rx="5.2" ry="5.6" fill="url(#spg)" stroke="#7a7a7a" stroke-width=".7"/><ellipse cx="5.6" cy="4.6" rx="1.8" ry="1.5" fill="#f4f4f4" opacity=".85"/><path d="M7 12L11 14.5L13.2 11M9.5 15L12.5 13.5" stroke="#cfcfcf" stroke-width="1.3" fill="none"/></svg><div class="t" style="left:63px;top:84px;font-size:11.5px;color:#d8d8d8;letter-spacing:-.4px">Windows Logon</div><div style="left:31px;top:105px;width:11px;height:1px;background:repeating-linear-gradient(90deg,#777 0 1px,transparent 1px 2px)"></div><svg style="left:42px;top:97px" width="15" height="16"><path d="M1.5 3L3 1.5" stroke="#ddd" stroke-width="1.2"/><ellipse cx="6.8" cy="6.2" rx="5.2" ry="5.6" fill="url(#spg)" stroke="#7a7a7a" stroke-width=".7"/><ellipse cx="5.6" cy="4.6" rx="1.8" ry="1.5" fill="#f4f4f4" opacity=".85"/><path d="M7 12L11 14.5L13.2 11M9.5 15L12.5 13.5" stroke="#cfcfcf" stroke-width="1.3" fill="none"/></svg><div class="t" style="left:63px;top:100px;font-size:11.5px;color:#d8d8d8;letter-spacing:-.4px">Windows User Account Control</div><div style="left:31px;top:121px;width:11px;height:1px;background:repeating-linear-gradient(90deg,#777 0 1px,transparent 1px 2px)"></div><svg style="left:42px;top:113px" width="15" height="16"><path d="M1.5 3L3 1.5" stroke="#ddd" stroke-width="1.2"/><ellipse cx="6.8" cy="6.2" rx="5.2" ry="5.6" fill="url(#spg)" stroke="#7a7a7a" stroke-width=".7"/><ellipse cx="5.6" cy="4.6" rx="1.8" ry="1.5" fill="#f4f4f4" opacity=".85"/><path d="M7 12L11 14.5L13.2 11M9.5 15L12.5 13.5" stroke="#cfcfcf" stroke-width="1.3" fill="none"/></svg><div class="t" style="left:63px;top:116px;font-size:11.5px;color:#d8d8d8;letter-spacing:-.4px">Windows Unlock</div><div style="left:12px;top:137px;width:11px;height:1px;background:repeating-linear-gradient(90deg,#777 0 1px,transparent 1px 2px)"></div><svg style="left:24px;top:130px" width="14" height="13"><rect x=".5" y=".5" width="13" height="12" fill="#fff" stroke="#6a9ad8" stroke-width="1"/><rect x="1" y="1" width="12" height="2.5" fill="#cfe0f8"/><rect x="2.5" y="5.5" width="2" height="5.5" fill="#3a78d8"/><rect x="6" y="5.5" width="5.5" height="5.5" fill="#3aa84a"/></svg><div style="left:31px;top:153px;width:11px;height:1px;background:repeating-linear-gradient(90deg,#777 0 1px,transparent 1px 2px)"></div><svg style="left:42px;top:145px" width="15" height="16"><path d="M1.5 3L3 1.5" stroke="#ddd" stroke-width="1.2"/><ellipse cx="6.8" cy="6.2" rx="5.2" ry="5.6" fill="url(#spg)" stroke="#7a7a7a" stroke-width=".7"/><ellipse cx="5.6" cy="4.6" rx="1.8" ry="1.5" fill="#f4f4f4" opacity=".85"/><path d="M7 12L11 14.5L13.2 11M9.5 15L12.5 13.5" stroke="#cfcfcf" stroke-width="1.3" fill="none"/><circle cx="10.5" cy="11.5" r="3.6" fill="#fff" stroke="#e03818" stroke-width="1.6"/><path d="M8 9L13 14" stroke="#e03818" stroke-width="1.6"/></svg><div class="t" style="left:63px;top:148px;font-size:11.5px;color:#d8d8d8;letter-spacing:-.4px">Breakpoint Hit</div><div style="left:12px;top:169px;width:11px;height:1px;background:repeating-linear-gradient(90deg,#777 0 1px,transparent 1px 2px)"></div><svg style="left:24px;top:162px" width="14" height="13"><rect x=".5" y=".5" width="13" height="12" fill="#fff" stroke="#6a9ad8" stroke-width="1"/><rect x="1" y="1" width="12" height="2.5" fill="#cfe0f8"/><rect x="2.5" y="5.5" width="2" height="5.5" fill="#3a78d8"/><rect x="6" y="5.5" width="5.5" height="5.5" fill="#3aa84a"/></svg><div class="t" style="left:44px;top:164px;font-size:11.5px;color:#d8d8d8;letter-spacing:-.4px">Etere</div><div style="left:31px;top:185px;width:11px;height:1px;background:repeating-linear-gradient(90deg,#777 0 1px,transparent 1px 2px)"></div><svg style="left:42px;top:177px" width="15" height="16"><path d="M1.5 3L3 1.5" stroke="#ddd" stroke-width="1.2"/><ellipse cx="6.8" cy="6.2" rx="5.2" ry="5.6" fill="url(#spg)" stroke="#7a7a7a" stroke-width=".7"/><ellipse cx="5.6" cy="4.6" rx="1.8" ry="1.5" fill="#f4f4f4" opacity=".85"/><path d="M7 12L11 14.5L13.2 11M9.5 15L12.5 13.5" stroke="#cfcfcf" stroke-width="1.3" fill="none"/></svg><div class="t" style="left:63px;top:180px;font-size:11.5px;color:#d8d8d8;letter-spacing:-.4px">Error 01</div><div style="left:31px;top:201px;width:11px;height:1px;background:repeating-linear-gradient(90deg,#777 0 1px,transparent 1px 2px)"></div><svg style="left:42px;top:193px" width="15" height="16"><path d="M1.5 3L3 1.5" stroke="#ddd" stroke-width="1.2"/><ellipse cx="6.8" cy="6.2" rx="5.2" ry="5.6" fill="url(#spg)" stroke="#7a7a7a" stroke-width=".7"/><ellipse cx="5.6" cy="4.6" rx="1.8" ry="1.5" fill="#f4f4f4" opacity=".85"/><path d="M7 12L11 14.5L13.2 11M9.5 15L12.5 13.5" stroke="#cfcfcf" stroke-width="1.3" fill="none"/></svg><div class="t" style="left:63px;top:196px;font-size:11.5px;color:#d8d8d8;letter-spacing:-.4px">Error 02</div><div style="left:31px;top:217px;width:11px;height:1px;background:repeating-linear-gradient(90deg,#777 0 1px,transparent 1px 2px)"></div><svg style="left:42px;top:209px" width="15" height="16"><path d="M1.5 3L3 1.5" stroke="#ddd" stroke-width="1.2"/><ellipse cx="6.8" cy="6.2" rx="5.2" ry="5.6" fill="url(#spg)" stroke="#7a7a7a" stroke-width=".7"/><ellipse cx="5.6" cy="4.6" rx="1.8" ry="1.5" fill="#f4f4f4" opacity=".85"/><path d="M7 12L11 14.5L13.2 11M9.5 15L12.5 13.5" stroke="#cfcfcf" stroke-width="1.3" fill="none"/></svg><div class="t" style="left:63px;top:212px;font-size:11.5px;color:#d8d8d8;letter-spacing:-.4px">Error 03</div><div style="left:31px;top:233px;width:11px;height:1px;background:repeating-linear-gradient(90deg,#777 0 1px,transparent 1px 2px)"></div><svg style="left:42px;top:225px" width="15" height="16"><path d="M1.5 3L3 1.5" stroke="#ddd" stroke-width="1.2"/><ellipse cx="6.8" cy="6.2" rx="5.2" ry="5.6" fill="url(#spg)" stroke="#7a7a7a" stroke-width=".7"/><ellipse cx="5.6" cy="4.6" rx="1.8" ry="1.5" fill="#f4f4f4" opacity=".85"/><path d="M7 12L11 14.5L13.2 11M9.5 15L12.5 13.5" stroke="#cfcfcf" stroke-width="1.3" fill="none"/></svg><div class="t" style="left:63px;top:228px;font-size:11.5px;color:#d8d8d8;letter-spacing:-.4px">Mute</div><div style="left:12px;top:249px;width:11px;height:1px;background:repeating-linear-gradient(90deg,#777 0 1px,transparent 1px 2px)"></div><svg style="left:24px;top:242px" width="14" height="13"><rect x=".5" y=".5" width="13" height="12" fill="#fff" stroke="#6a9ad8" stroke-width="1"/><rect x="1" y="1" width="12" height="2.5" fill="#cfe0f8"/><rect x="2.5" y="5.5" width="2" height="5.5" fill="#3a78d8"/><rect x="6" y="5.5" width="5.5" height="5.5" fill="#3aa84a"/></svg><div class="t" style="left:44px;top:244px;font-size:11.5px;color:#d8d8d8;letter-spacing:-.4px">File Explorer</div><div style="left:31px;top:265px;width:11px;height:1px;background:repeating-linear-gradient(90deg,#777 0 1px,transparent 1px 2px)"></div><svg style="left:42px;top:257px" width="15" height="16"><path d="M1.5 3L3 1.5" stroke="#ddd" stroke-width="1.2"/><ellipse cx="6.8" cy="6.2" rx="5.2" ry="5.6" fill="url(#spg)" stroke="#7a7a7a" stroke-width=".7"/><ellipse cx="5.6" cy="4.6" rx="1.8" ry="1.5" fill="#f4f4f4" opacity=".85"/><path d="M7 12L11 14.5L13.2 11M9.5 15L12.5 13.5" stroke="#cfcfcf" stroke-width="1.3" fill="none"/><circle cx="10.5" cy="11.5" r="3.6" fill="#fff" stroke="#e03818" stroke-width="1.6"/><path d="M8 9L13 14" stroke="#e03818" stroke-width="1.6"/></svg><div class="t" style="left:63px;top:260px;font-size:11.5px;color:#d8d8d8;letter-spacing:-.4px">Complete Navigation</div><div style="left:31px;top:281px;width:11px;height:1px;background:repeating-linear-gradient(90deg,#777 0 1px,transparent 1px 2px)"></div><svg style="left:42px;top:273px" width="15" height="16"><path d="M1.5 3L3 1.5" stroke="#ddd" stroke-width="1.2"/><ellipse cx="6.8" cy="6.2" rx="5.2" ry="5.6" fill="url(#spg)" stroke="#7a7a7a" stroke-width=".7"/><ellipse cx="5.6" cy="4.6" rx="1.8" ry="1.5" fill="#f4f4f4" opacity=".85"/><path d="M7 12L11 14.5L13.2 11M9.5 15L12.5 13.5" stroke="#cfcfcf" stroke-width="1.3" fill="none"/><circle cx="10.5" cy="11.5" r="3.6" fill="#fff" stroke="#e03818" stroke-width="1.6"/><path d="M8 9L13 14" stroke="#e03818" stroke-width="1.6"/></svg><div class="t" style="left:63px;top:276px;font-size:11.5px;color:#d8d8d8;letter-spacing:-.4px">Blocked Pop-up Window</div></div><svg style="left:1072px;top:536px" width="8" height="8"><path d="M0 5L4 0L8 5Z" fill="#9a9a9a"/></svg><svg style="left:1072px;top:801px" width="8" height="8"><path d="M0 0L8 0L4 5Z" fill="#9a9a9a"/></svg><div style="left:1070px;top:699px;width:13px;height:45px;background:#8a8a8a;border-radius:5px"></div><div style="left:731px;top:691px;width:121px;height:81px;border:3px solid #ffee22"></div><div style="left:1392px;top:503px;width:399px;height:454px;background:#f0f0f0;border:1px solid #858585;box-shadow:0 4px 14px rgba(0,0,0,.45)"></div><div style="left:1393px;top:504px;width:397px;height:30px;background:#fff"></div><svg style="left:1402px;top:511px" width="13" height="13"><ellipse cx="6" cy="6.5" rx="5" ry="6" fill="#b8b8b8" stroke="#666" stroke-width=".8"/><ellipse cx="7" cy="6.5" rx="3" ry="4.5" fill="#555"/><path d="M3 2C5 1 8 2 9 4" stroke="#fff" stroke-width="1" fill="none"/></svg><div class="t" style="left:1421px;top:511px;font-family:'DejaVu Sans Condensed','DejaVu Sans',sans-serif;font-stretch:condensed;margin-top:.8px;font-size:12px;color:#000">Sound</div><svg style="left:1769px;top:511px" width="12" height="12"><path d="M.5 .5L11 11M11 .5L.5 11" stroke="#111" stroke-width="1.1"/></svg><div style="left:1400px;top:543px;width:54px;height:19px;background:#f0f0f0;border:1px solid #d9d9d9"></div><div class="t" style="left:1405px;top:546px;font-family:'DejaVu Sans Condensed','DejaVu Sans',sans-serif;font-stretch:condensed;margin-top:.8px;font-size:11.3px;color:#000;letter-spacing:-.4px">Playback</div><div style="left:1453px;top:543px;width:60px;height:19px;background:#f0f0f0;border:1px solid #d9d9d9"></div><div class="t" style="left:1459px;top:546px;font-family:'DejaVu Sans Condensed','DejaVu Sans',sans-serif;font-stretch:condensed;margin-top:.8px;font-size:11.3px;color:#000;letter-spacing:-.4px">Recording</div><div style="left:1562px;top:543px;width:86px;height:19px;background:#f0f0f0;border:1px solid #d9d9d9"></div><div class="t" style="left:1566px;top:546px;font-family:'DejaVu Sans Condensed','DejaVu Sans',sans-serif;font-stretch:condensed;margin-top:.8px;font-size:11.3px;color:#000;letter-spacing:-.4px">Communications</div><div style="left:1399px;top:561px;width:383px;height:357px;background:#fff;border:1px solid #d9d9d9"></div><div style="left:1512px;top:541px;width:51px;height:21px;background:#fff;border:1px solid #d9d9d9;border-bottom:none"></div><div class="t" style="left:1519px;top:544px;font-family:'DejaVu Sans Condensed','DejaVu Sans',sans-serif;font-stretch:condensed;margin-top:.8px;font-size:11.3px;color:#000;letter-spacing:-.35px">Sounds</div><div class="t" style="left:1417px;top:574px;white-space:pre;font-family:'DejaVu Sans Condensed','DejaVu Sans',sans-serif;font-stretch:condensed;margin-top:.8px;font-size:11.3px;color:#000;letter-spacing:0.12px">A sound theme is a set of sounds applied to events in Windows</div><div class="t" style="left:1417px;top:587px;white-space:pre;font-family:'DejaVu Sans Condensed','DejaVu Sans',sans-serif;font-stretch:condensed;margin-top:.8px;font-size:11.3px;color:#000;letter-spacing:0.005px">and programs.  You can select an existing scheme or save one you</div><div class="t" style="left:1417px;top:600px;white-space:pre;font-family:'DejaVu Sans Condensed','DejaVu Sans',sans-serif;font-stretch:condensed;margin-top:.8px;font-size:11.3px;color:#000;letter-spacing:0.3px">have modified.</div><div class="t" style="left:1417px;top:620px;font-family:'DejaVu Sans Condensed','DejaVu Sans',sans-serif;font-stretch:condensed;margin-top:.8px;font-size:11.3px;color:#000;letter-spacing:.1px;">Sound Scheme:</div><div style="left:1417px;top:638px;width:188px;height:21px;background:#e1e1e1;border:1px solid #adadad"></div><div class="t" style="left:1421px;top:643px;font-family:'DejaVu Sans Condensed','DejaVu Sans',sans-serif;font-stretch:condensed;margin-top:.8px;font-size:11.3px;color:#000;letter-spacing:.1px;">Windows Default</div><svg style="left:1590px;top:645px" width="10" height="7"><path d="M1 1L5 5L9 1" stroke="#333" stroke-width="1.1" fill="none"/></svg><div style="left:1613px;top:638px;width:73px;height:21px;background:#e1e1e1;border:1px solid #adadad"></div><div class="t" style="left:1613px;top:643px;width:73px;text-align:center;font-family:'DejaVu Sans Condensed','DejaVu Sans',sans-serif;font-stretch:condensed;margin-top:.8px;font-size:11.3px;color:#000;letter-spacing:.1px">Save As...</div><div style="left:1691px;top:638px;width:73px;height:21px;background:#cccccc;border:1px solid #bfbfbf"></div><div class="t" style="left:1691px;top:643px;width:73px;text-align:center;font-family:'DejaVu Sans Condensed','DejaVu Sans',sans-serif;font-stretch:condensed;margin-top:.8px;font-size:11.3px;color:#838383;letter-spacing:.1px">Delete</div><div class="t" style="left:1417px;top:667px;white-space:pre;font-family:'DejaVu Sans Condensed','DejaVu Sans',sans-serif;font-stretch:condensed;margin-top:.8px;font-size:11.3px;color:#000;letter-spacing:0.12px">To change sounds, click a program event in the following list and</div><div class="t" style="left:1417px;top:680px;white-space:pre;font-family:'DejaVu Sans Condensed','DejaVu Sans',sans-serif;font-stretch:condensed;margin-top:.8px;font-size:11.3px;color:#000;letter-spacing:0.045px">then select a sound to apply.  You can save the changes as a new</div><div class="t" style="left:1417px;top:693px;white-space:pre;font-family:'DejaVu Sans Condensed','DejaVu Sans',sans-serif;font-stretch:condensed;margin-top:.8px;font-size:11.3px;color:#000;letter-spacing:0.3px">sound scheme.</div><div class="t" style="left:1417px;top:711px;font-family:'DejaVu Sans Condensed','DejaVu Sans',sans-serif;font-stretch:condensed;margin-top:.8px;font-size:11.3px;color:#000;letter-spacing:.1px;">Program Events:</div><div style="left:1417px;top:729px;width:348px;height:98px;background:#fff;border:1px solid #828790"></div><div style="left:1418px;top:730px;width:346px;height:96px;overflow:hidden"><svg style="left:4px;top:2px" width="16" height="14"><rect x=".5" y=".5" width="15" height="13" fill="#fff" stroke="#777" stroke-width="1"/><rect x="1" y="1" width="14" height="2" fill="#ddd"/><rect x="3" y="5" width="5" height="6" fill="#6a6a6a"/><path d="M9.5 6H12M9.5 8H12M9.5 10H12M13.5 5V9" stroke="#777" stroke-width="1"/></svg><div class="t" style="left:25px;top:3px;font-family:'DejaVu Sans Condensed','DejaVu Sans',sans-serif;font-stretch:condensed;margin-top:.8px;font-size:11.3px;color:#000;letter-spacing:.1px">Etere</div><svg style="left:25px;top:18px" width="10" height="14"><path d="M.6 4.5H3.2L7.6 .8V13.2L3.2 9.5H.6Z M3.2 4.5V9.5" fill="#fff" stroke="#5a5a5a" stroke-width="1.1"/></svg><div class="t" style="left:44px;top:19px;font-family:'DejaVu Sans Condensed','DejaVu Sans',sans-serif;font-stretch:condensed;margin-top:.8px;font-size:11.3px;color:#000;letter-spacing:.1px">Error 01</div><div style="left:12px;top:25px;width:11px;height:1px;background:repeating-linear-gradient(90deg,#888 0 1px,transparent 1px 2px)"></div><svg style="left:25px;top:34px" width="10" height="14"><path d="M.6 4.5H3.2L7.6 .8V13.2L3.2 9.5H.6Z M3.2 4.5V9.5" fill="#fff" stroke="#5a5a5a" stroke-width="1.1"/></svg><div class="t" style="left:44px;top:35px;font-family:'DejaVu Sans Condensed','DejaVu Sans',sans-serif;font-stretch:condensed;margin-top:.8px;font-size:11.3px;color:#000;letter-spacing:.1px">Error 02</div><div style="left:12px;top:41px;width:11px;height:1px;background:repeating-linear-gradient(90deg,#888 0 1px,transparent 1px 2px)"></div><svg style="left:25px;top:50px" width="10" height="14"><path d="M.6 4.5H3.2L7.6 .8V13.2L3.2 9.5H.6Z M3.2 4.5V9.5" fill="#fff" stroke="#5a5a5a" stroke-width="1.1"/></svg><div class="t" style="left:44px;top:51px;font-family:'DejaVu Sans Condensed','DejaVu Sans',sans-serif;font-stretch:condensed;margin-top:.8px;font-size:11.3px;color:#000;letter-spacing:.1px">Error 03</div><div style="left:12px;top:57px;width:11px;height:1px;background:repeating-linear-gradient(90deg,#888 0 1px,transparent 1px 2px)"></div><svg style="left:25px;top:66px" width="10" height="14"><path d="M.6 4.5H3.2L7.6 .8V13.2L3.2 9.5H.6Z M3.2 4.5V9.5" fill="#fff" stroke="#5a5a5a" stroke-width="1.1"/></svg><div class="t" style="left:44px;top:67px;font-family:'DejaVu Sans Condensed','DejaVu Sans',sans-serif;font-stretch:condensed;margin-top:.8px;font-size:11.3px;color:#000;letter-spacing:.1px">Mute</div><div style="left:12px;top:73px;width:11px;height:1px;background:repeating-linear-gradient(90deg,#888 0 1px,transparent 1px 2px)"></div><svg style="left:4px;top:82px" width="16" height="14"><rect x=".5" y=".5" width="15" height="13" fill="#fff" stroke="#777" stroke-width="1"/><rect x="1" y="1" width="14" height="2" fill="#ddd"/><rect x="3" y="5" width="5" height="6" fill="#6a6a6a"/><path d="M9.5 6H12M9.5 8H12M9.5 10H12M13.5 5V9" stroke="#777" stroke-width="1"/></svg><div class="t" style="left:25px;top:83px;font-family:'DejaVu Sans Condensed','DejaVu Sans',sans-serif;font-stretch:condensed;margin-top:.8px;font-size:11.3px;color:#000;letter-spacing:.1px">File Explorer</div><div style="left:12px;top:17px;width:1px;height:57px;background:repeating-linear-gradient(#888 0 1px,transparent 1px 2px)"></div></div><div style="left:1747px;top:730px;width:17px;height:96px;background:#f0f0f0"></div><svg style="left:1750px;top:736px" width="10" height="7"><path d="M1 6L5 1.5L9 6" stroke="#444" stroke-width="1.5" fill="none"/></svg><svg style="left:1750px;top:813px" width="10" height="7"><path d="M1 1L5 5.5L9 1" stroke="#444" stroke-width="1.5" fill="none"/></svg><div style="left:1747px;top:777px;width:17px;height:17px;background:#cdcdcd"></div><div style="left:1404px;top:724px;width:120px;height:91px;border:5px solid #fff000"></div><div style="left:1417px;top:837px;width:13px;height:13px;background:#fff;border:1px solid #333"></div><div class="t" style="left:1433px;top:838px;font-family:'DejaVu Sans Condensed','DejaVu Sans',sans-serif;font-stretch:condensed;margin-top:.8px;font-size:11.3px;color:#000;letter-spacing:.1px;">Play Windows Startup sound</div><div class="t" style="left:1417px;top:860px;font-family:'DejaVu Sans Condensed','DejaVu Sans',sans-serif;font-stretch:condensed;margin-top:.8px;font-size:11.3px;color:#000;letter-spacing:.1px;color:#9a9a9a">Sounds:</div><div style="left:1417px;top:877px;width:188px;height:21px;background:#cccccc;border:1px solid #bfbfbf"></div><div class="t" style="left:1421px;top:882px;font-family:'DejaVu Sans Condensed','DejaVu Sans',sans-serif;font-stretch:condensed;margin-top:.8px;font-size:11.3px;color:#000;letter-spacing:.1px;color:#7a7a7a">(None)</div><svg style="left:1590px;top:884px" width="10" height="7"><path d="M1 1L5 5L9 1" stroke="#b4b4b4" stroke-width="1.1" fill="none"/></svg><div style="left:1613px;top:878px;width:73px;height:21px;background:#cccccc;border:1px solid #bfbfbf"></div><svg style="left:1632px;top:882px" width="12" height="13"><path d="M.5 .5L11.5 6.5L.5 12.5Z" fill="#5aba5a"/></svg><div class="t" style="left:1647px;top:883px;font-family:'DejaVu Sans Condensed','DejaVu Sans',sans-serif;font-stretch:condensed;margin-top:.8px;font-size:11.3px;color:#000;letter-spacing:.1px;color:#838383">Test</div><div style="left:1691px;top:878px;width:73px;height:21px;background:#cccccc;border:1px solid #bfbfbf"></div><div class="t" style="left:1691px;top:883px;width:73px;text-align:center;font-family:'DejaVu Sans Condensed','DejaVu Sans',sans-serif;font-stretch:condensed;margin-top:.8px;font-size:11.3px;color:#838383;letter-spacing:.1px">Browse...</div><div style="left:1548px;top:927px;width:73px;height:21px;background:#e1e1e1;border:2px solid #0078d7"></div><div class="t" style="left:1548px;top:932px;width:73px;text-align:center;font-family:'DejaVu Sans Condensed','DejaVu Sans',sans-serif;font-stretch:condensed;margin-top:.8px;font-size:11.8px;color:#000;letter-spacing:-.2px">OK</div><div style="left:1629px;top:927px;width:73px;height:21px;background:#e1e1e1;border:1px solid #adadad"></div><div class="t" style="left:1629px;top:932px;width:73px;text-align:center;font-family:'DejaVu Sans Condensed','DejaVu Sans',sans-serif;font-stretch:condensed;margin-top:.8px;font-size:11.8px;color:#000;letter-spacing:-.2px">Cancel</div><div style="left:1710px;top:927px;width:73px;height:21px;background:#cccccc;border:1px solid #bfbfbf"></div><div class="t" style="left:1710px;top:932px;width:73px;text-align:center;font-family:'DejaVu Sans Condensed','DejaVu Sans',sans-serif;font-stretch:condensed;margin-top:.8px;font-size:11.8px;color:#838383;letter-spacing:-.2px">Apply</div><div class="t" style="left:1600px;top:947px;font-family:'DejaVu Sans Condensed','DejaVu Sans',sans-serif;font-stretch:condensed;margin-top:.8px;font-size:19.8px;color:rgba(125,125,125,.38);letter-spacing:-.2px">Activate Windows</div><div class="t" style="left:1599px;top:972px;font-family:'DejaVu Sans Condensed','DejaVu Sans',sans-serif;font-stretch:condensed;margin-top:.8px;font-size:15.2px;color:rgba(125,125,125,.42);letter-spacing:-.2px">Go to Settings to activate Windows.</div></body></html>
